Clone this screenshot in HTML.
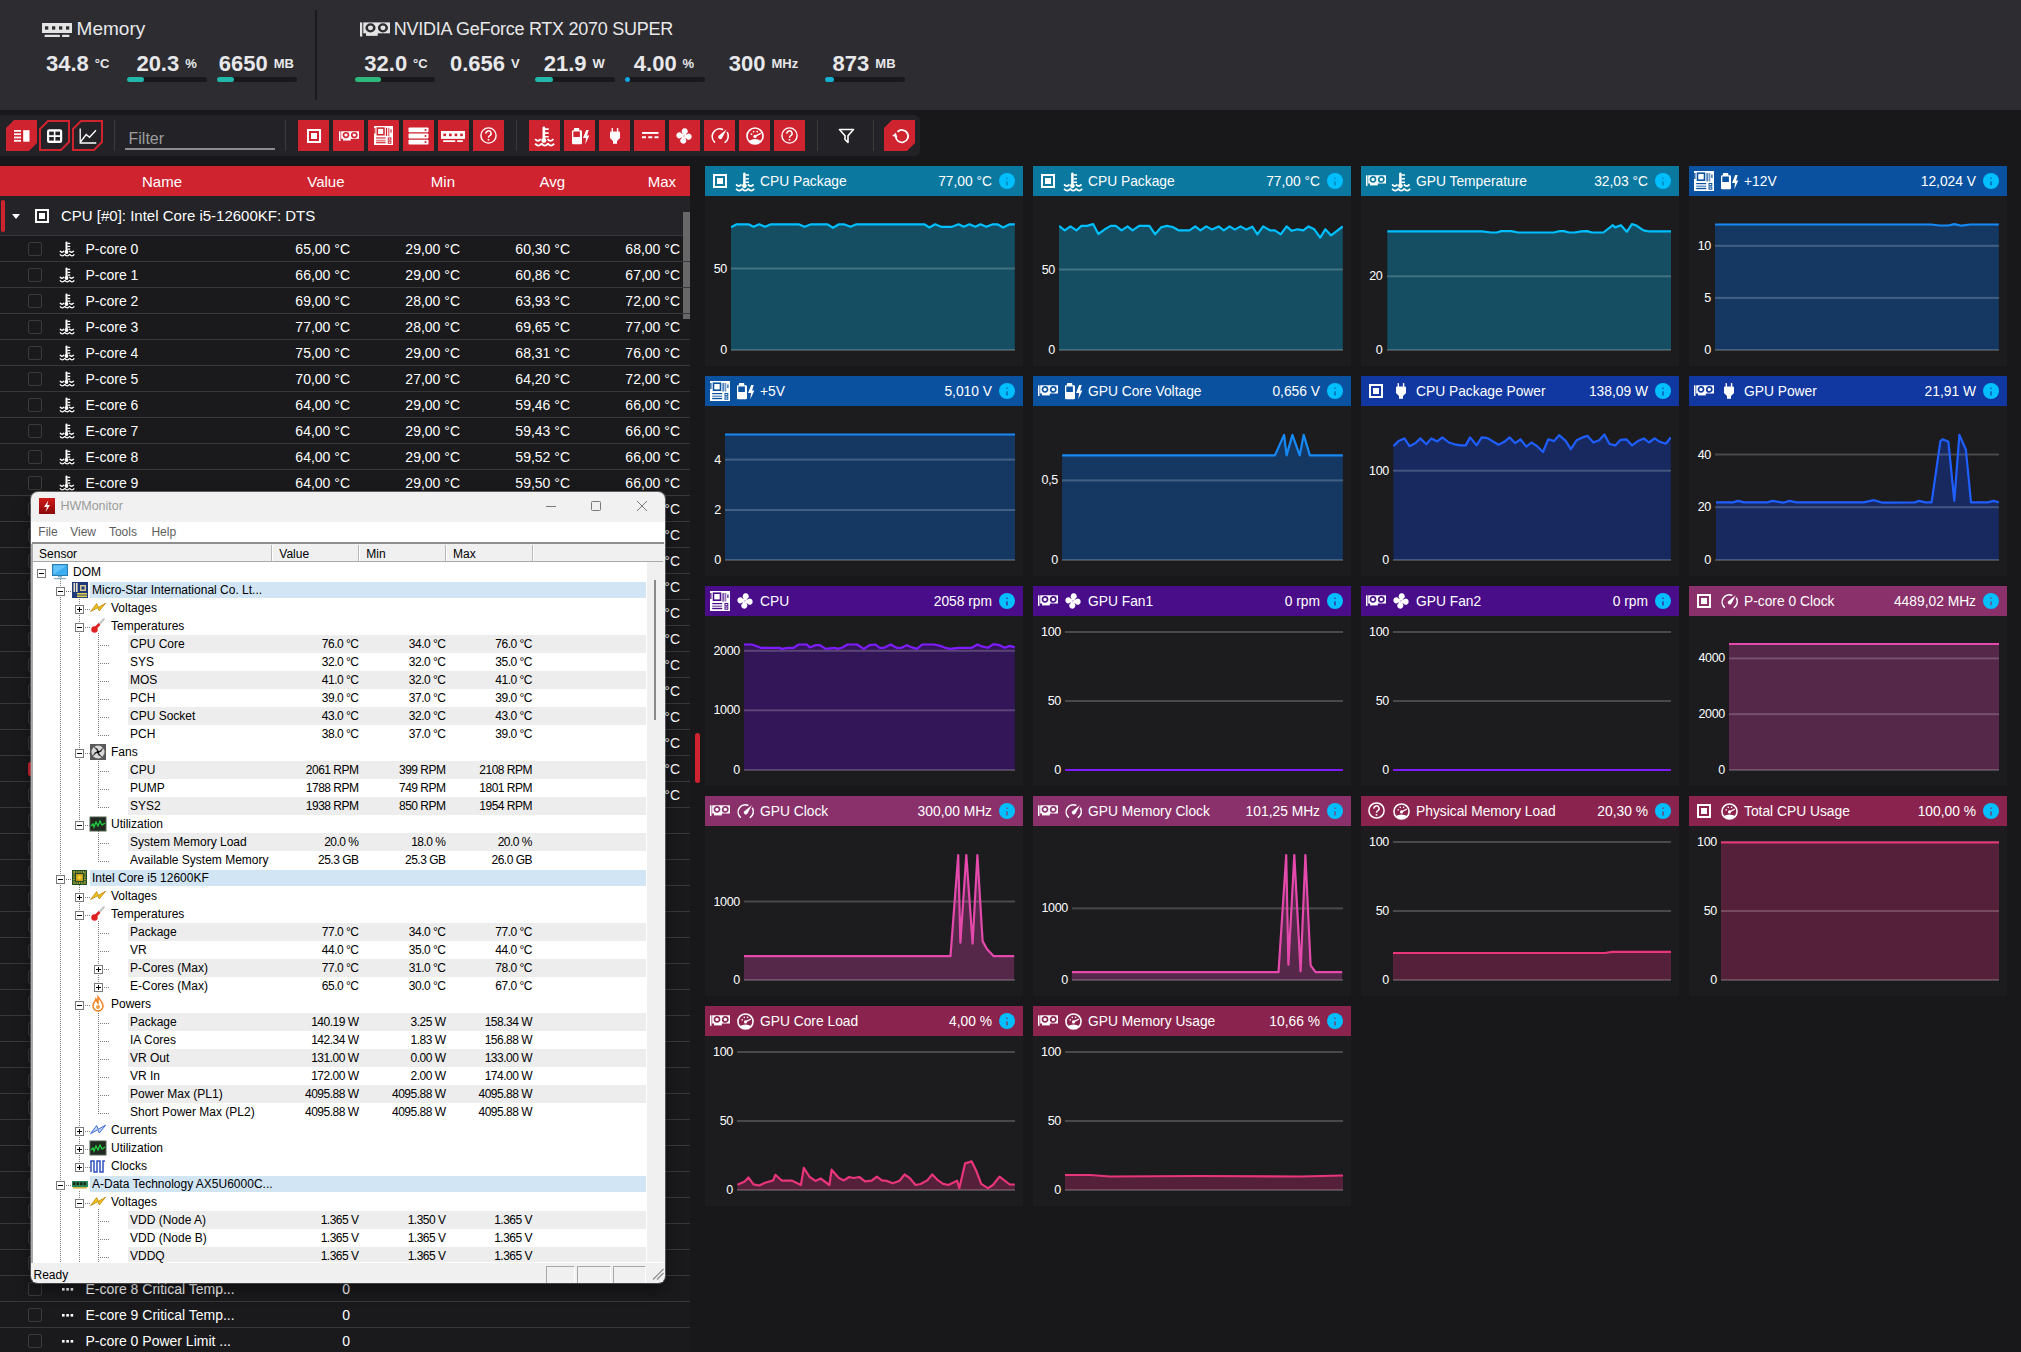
<!DOCTYPE html>
<html><head><meta charset="utf-8"><style>
html,body{margin:0;padding:0;}
body{width:2021px;height:1352px;overflow:hidden;position:relative;background:#18181b;font-family:"Liberation Sans", sans-serif;}
.t{position:absolute;white-space:nowrap;line-height:1;}
.a{position:absolute;}
svg{overflow:visible}
</style></head><body>
<div class="a" style="left:0;top:0;width:2021px;height:110px;background:#2c2c31"></div><div class="a" style="left:0;top:110px;width:2021px;height:56px;background:#18181b"></div><svg style="position:absolute;left:42px;top:23px" width="30" height="14" viewBox="0 0 30 14" ><rect x="0" y="0" width="30" height="10" fill="#e4e4e4"/><rect x="3" y="3.3" width="3.3" height="3.3" fill="#2c2c31"/><rect x="10" y="3.3" width="3.3" height="3.3" fill="#2c2c31"/><rect x="17" y="3.3" width="3.3" height="3.3" fill="#2c2c31"/><rect x="24" y="3.3" width="3.3" height="3.3" fill="#2c2c31"/><rect x="2.5" y="11.8" width="15.5" height="2.2" rx=".8" fill="#e4e4e4"/><rect x="20" y="11.8" width="7.5" height="2.2" rx=".8" fill="#e4e4e4"/></svg><div class="t" style="left:76.6px;top:19.22px;font-size:19px;color:#e8e8ea;">Memory</div><svg style="position:absolute;left:360px;top:22px" width="30" height="16" viewBox="0 0 20 12" preserveAspectRatio="none"><rect x="0" y="0.3" width="1.5" height="10.6" fill="#e4e4e4"/><rect x="2.2" y="0.3" width="17.8" height="8.2" fill="#e4e4e4"/><rect x="4" y="8" width="7.8" height="2.4" fill="#e4e4e4"/><circle cx="7" cy="4.4" r="2.55" fill="none" stroke="#2c2c31" stroke-width="1.7"/><circle cx="15.3" cy="4.4" r="2.55" fill="none" stroke="#2c2c31" stroke-width="1.7"/></svg><div class="t" style="left:393.8px;top:20.06px;font-size:18px;color:#e8e8ea;letter-spacing:-0.26px;">NVIDIA GeForce RTX 2070 SUPER</div><div class="a" style="left:315px;top:10px;width:2px;height:90px;background:#1b1b1f"></div><div class="t" style="left:46px;top:52.58px;font-size:22px;color:#e8e8ea;font-weight:bold;">34.8</div><div class="t" style="left:94.8125px;top:57.0px;font-size:13px;color:#e8e8ea;font-weight:bold;">°C</div><div class="t" style="left:136.4px;top:52.58px;font-size:22px;color:#e8e8ea;font-weight:bold;">20.3</div><div class="t" style="left:185.2125px;top:57.0px;font-size:13px;color:#e8e8ea;font-weight:bold;">%</div><div class="t" style="left:218.8px;top:52.58px;font-size:22px;color:#e8e8ea;font-weight:bold;">6650</div><div class="t" style="left:273.7375px;top:57.0px;font-size:13px;color:#e8e8ea;font-weight:bold;">MB</div><div class="t" style="left:364.3px;top:52.58px;font-size:22px;color:#e8e8ea;font-weight:bold;">32.0</div><div class="t" style="left:413.1125px;top:57.0px;font-size:13px;color:#e8e8ea;font-weight:bold;">°C</div><div class="t" style="left:449.9px;top:52.58px;font-size:22px;color:#e8e8ea;font-weight:bold;">0.656</div><div class="t" style="left:510.946875px;top:57.0px;font-size:13px;color:#e8e8ea;font-weight:bold;">V</div><div class="t" style="left:543.7px;top:52.58px;font-size:22px;color:#e8e8ea;font-weight:bold;">21.9</div><div class="t" style="left:592.5125px;top:57.0px;font-size:13px;color:#e8e8ea;font-weight:bold;">W</div><div class="t" style="left:633.8px;top:52.58px;font-size:22px;color:#e8e8ea;font-weight:bold;">4.00</div><div class="t" style="left:682.6125px;top:57.0px;font-size:13px;color:#e8e8ea;font-weight:bold;">%</div><div class="t" style="left:728.8px;top:52.58px;font-size:22px;color:#e8e8ea;font-weight:bold;">300</div><div class="t" style="left:771.503125px;top:57.0px;font-size:13px;color:#e8e8ea;font-weight:bold;">MHz</div><div class="t" style="left:832.6px;top:52.58px;font-size:22px;color:#e8e8ea;font-weight:bold;">873</div><div class="t" style="left:875.303125px;top:57.0px;font-size:13px;color:#e8e8ea;font-weight:bold;">MB</div><div class="a" style="left:127px;top:77px;width:80px;height:5px;border-radius:3px;background:#19191c"></div><div class="a" style="left:127px;top:77px;width:17px;height:5px;border-radius:3px;background:#22b8a9"></div><div class="a" style="left:217px;top:77px;width:80px;height:5px;border-radius:3px;background:#19191c"></div><div class="a" style="left:217px;top:77px;width:17px;height:5px;border-radius:3px;background:#22b8a9"></div><div class="a" style="left:355px;top:77px;width:80px;height:5px;border-radius:3px;background:#19191c"></div><div class="a" style="left:355px;top:77px;width:26px;height:5px;border-radius:3px;background:#2fb87c"></div><div class="a" style="left:535px;top:77px;width:80px;height:5px;border-radius:3px;background:#19191c"></div><div class="a" style="left:535px;top:77px;width:18px;height:5px;border-radius:3px;background:#22b8a9"></div><div class="a" style="left:625px;top:77px;width:80px;height:5px;border-radius:3px;background:#19191c"></div><div class="a" style="left:625px;top:77px;width:5px;height:5px;border-radius:3px;background:#12a6e6"></div><div class="a" style="left:825px;top:77px;width:80px;height:5px;border-radius:3px;background:#19191c"></div><div class="a" style="left:825px;top:77px;width:9px;height:5px;border-radius:3px;background:#16b2d2"></div><div class="a" style="left:0;top:115px;width:920px;height:41px;border-radius:0 6px 6px 0;background:#232327"></div><div class="a" style="left:6px;top:120px;width:31px;height:31px;background:#cf232f;clip-path:polygon(8px 0,100% 0,100% calc(100% - 8px),calc(100% - 8px) 100%,0 100%,0 8px)"></div><svg style="position:absolute;left:6px;top:120px" width="31" height="31" viewBox="0 0 31 31" ><g fill="#fff"><rect x="8" y="10" width="7" height="1.8"/><rect x="8" y="13.3" width="7" height="1.8"/><rect x="8" y="16.6" width="7" height="1.8"/><rect x="8" y="19.9" width="7" height="1.8"/><rect x="17.2" y="10.2" width="6.3" height="11.5"/></g></svg><svg style="position:absolute;left:39px;top:120px" width="31" height="31" viewBox="0 0 31 31" ><polygon points="9,1 30,1 30,22 22,30 1,30 1,9" fill="none" stroke="#cf232f" stroke-width="2"/></svg><svg style="position:absolute;left:72px;top:120px" width="31" height="31" viewBox="0 0 31 31" ><polygon points="9,1 30,1 30,22 22,30 1,30 1,9" fill="none" stroke="#cf232f" stroke-width="2"/></svg><svg style="position:absolute;left:39px;top:120px" width="31" height="31" viewBox="0 0 31 31" ><rect x="8" y="9.2" width="15.2" height="13.8" rx="2.2" fill="#fff"/><g fill="#232327"><rect x="10.2" y="11.6" width="4.6" height="3.6"/><rect x="16.4" y="11.6" width="4.6" height="3.6"/><rect x="10.2" y="17" width="4.6" height="3.6"/><rect x="16.4" y="17" width="4.6" height="3.6"/></g></svg><svg style="position:absolute;left:72px;top:120px" width="31" height="31" viewBox="0 0 31 31" ><path d="M8.2 8.5 V23 H24.3" fill="none" stroke="#fff" stroke-width="1.3"/><path d="M8.5 22 L14.2 14.5 L17.5 17.3 L24 10.2" fill="none" stroke="#fff" stroke-width="1.3"/></svg><div class="a" style="left:114px;top:120px;width:1px;height:31px;background:#3a3a36"></div><div class="a" style="left:285px;top:120px;width:1px;height:31px;background:#3a3a36"></div><div class="a" style="left:516px;top:120px;width:1px;height:31px;background:#3a3a36"></div><div class="a" style="left:817px;top:120px;width:1px;height:31px;background:#3a3a36"></div><div class="a" style="left:873px;top:120px;width:1px;height:31px;background:#3a3a36"></div><div class="t" style="left:128.5px;top:130.96px;font-size:16px;color:#9c9c9c;">Filter</div><div class="a" style="left:125px;top:148px;width:150px;height:1.5px;background:#8c8c8c"></div><div class="a" style="left:298px;top:120px;width:31px;height:31px;background:#cf232f"></div><div class="a" style="left:333px;top:120px;width:31px;height:31px;background:#cf232f"></div><div class="a" style="left:368px;top:120px;width:31px;height:31px;background:#cf232f"></div><div class="a" style="left:403px;top:120px;width:31px;height:31px;background:#cf232f"></div><div class="a" style="left:438px;top:120px;width:31px;height:31px;background:#cf232f"></div><div class="a" style="left:473px;top:120px;width:31px;height:31px;background:#cf232f"></div><div class="a" style="left:529px;top:120px;width:31px;height:31px;background:#cf232f"></div><div class="a" style="left:564px;top:120px;width:31px;height:31px;background:#cf232f"></div><div class="a" style="left:599px;top:120px;width:31px;height:31px;background:#cf232f"></div><div class="a" style="left:634px;top:120px;width:31px;height:31px;background:#cf232f"></div><div class="a" style="left:669px;top:120px;width:31px;height:31px;background:#cf232f"></div><div class="a" style="left:704px;top:120px;width:31px;height:31px;background:#cf232f"></div><div class="a" style="left:739px;top:120px;width:31px;height:31px;background:#cf232f"></div><div class="a" style="left:774px;top:120px;width:31px;height:31px;background:#cf232f"></div><svg style="position:absolute;left:306.5px;top:128.5px" width="14" height="14" viewBox="0 0 14 14" ><rect x="1" y="1" width="12" height="12" fill="none" stroke="#fff" stroke-width="2"/><rect x="4" y="4" width="6" height="6" fill="#fff"/></svg><svg style="position:absolute;left:338.5px;top:131px" width="20" height="11" viewBox="0 0 20 12" preserveAspectRatio="none"><rect x="0" y="0.3" width="1.5" height="10.6" fill="#fff"/><rect x="2.2" y="0.3" width="17.8" height="8.2" fill="#fff"/><rect x="4" y="8" width="7.8" height="2.4" fill="#fff"/><circle cx="7" cy="4.4" r="2.55" fill="none" stroke="#cf232f" stroke-width="1.7"/><circle cx="15.3" cy="4.4" r="2.55" fill="none" stroke="#cf232f" stroke-width="1.7"/></svg><svg style="position:absolute;left:374px;top:126px" width="19" height="19" viewBox="0 0 20 20" ><rect x="0" y="0" width="20" height="20" fill="#fff"/><rect x="3.5" y="2.2" width="7" height="7" fill="none" stroke="#cf232f" stroke-width="1.6"/><rect x="12.5" y="2" width="1.2" height="8.5" fill="#cf232f"/><rect x="14.5" y="2" width="1.8" height="8.5" fill="#cf232f" opacity=".6"/><rect x="17.3" y="3.5" width="1.2" height="3.5" fill="#cf232f"/><rect x="0" y="2" width="1.6" height="6" fill="#cf232f" opacity=".8"/><rect x="2.2" y="12" width="10" height="1.2" fill="#cf232f"/><rect x="2.2" y="14.5" width="10" height="1.8" fill="#cf232f" opacity=".6"/><rect x="2.2" y="17" width="10" height="1.2" fill="#cf232f"/><rect x="15" y="12.5" width="2.8" height="2.2" fill="none" stroke="#cf232f" stroke-width="1"/><rect x="15" y="16" width="2.8" height="2.2" fill="none" stroke="#cf232f" stroke-width="1"/></svg><svg style="position:absolute;left:408px;top:127px" width="21" height="18" viewBox="0 0 21 18" ><g fill="#fff"><rect x="0.5" y="0.5" width="20" height="4.8" rx=".8"/><rect x="0.5" y="6.6" width="20" height="4.8" rx=".8"/><rect x="0.5" y="12.7" width="20" height="4.8" rx=".8"/></g><g fill="#cf232f"><circle cx="17.5" cy="2.9" r="1"/><circle cx="17.5" cy="9" r="1"/><circle cx="17.5" cy="15.1" r="1"/></g></svg><svg style="position:absolute;left:441px;top:131px" width="24" height="11" viewBox="0 0 30 14" preserveAspectRatio="none"><rect x="0" y="0" width="30" height="10" fill="#fff"/><rect x="3" y="3.3" width="3.3" height="3.3" fill="#cf232f"/><rect x="10" y="3.3" width="3.3" height="3.3" fill="#cf232f"/><rect x="17" y="3.3" width="3.3" height="3.3" fill="#cf232f"/><rect x="24" y="3.3" width="3.3" height="3.3" fill="#cf232f"/><rect x="2.5" y="11.8" width="15.5" height="2.2" rx=".8" fill="#fff"/><rect x="20" y="11.8" width="7.5" height="2.2" rx=".8" fill="#fff"/></svg><svg style="position:absolute;left:480px;top:127px" width="17" height="17" viewBox="0 0 17 17" ><circle cx="8.5" cy="8.5" r="7.6" fill="none" stroke="#fff" stroke-width="1.4"/><path d="M5.9 6.6 A2.6 2.6 0 1 1 9.8 8.7 Q8.5 9.4 8.5 10.8" fill="none" stroke="#fff" stroke-width="1.5"/><rect x="7.7" y="12" width="1.6" height="1.6" fill="#fff"/></svg><svg style="position:absolute;left:534px;top:126px" width="21" height="21" viewBox="0 0 16 16" ><g fill="none" stroke="#fff"><path d="M7.5 1.4 V10.5" stroke-width="2" stroke-linecap="round"/><path d="M8.4 2.4 H11.2 M8.4 5.4 H11.2 M8.4 8.2 H11.2" stroke-width="1.3"/><path d="M0.9 9.9 Q3 12.7 5.1 9.9 M10.3 9.9 Q12.5 12.7 14.8 9.9" stroke-width="1.4"/><path d="M0.9 13.4 Q3.4 16.4 5.8 13.4 Q8.2 16.4 10.6 13.4 Q13 16.4 15.3 13.4" stroke-width="1.4" stroke-linejoin="bevel"/></g><circle cx="7.5" cy="11" r="1.9" fill="#fff"/></svg><svg style="position:absolute;left:572px;top:128px" width="18" height="17" viewBox="0 0 18 17" ><rect x="1.9" y="0" width="5.4" height="3" rx="1" fill="#fff"/><rect x="0" y="2.2" width="10" height="14.1" rx="1.2" fill="#fff"/><rect x="1.3" y="3.5" width="6.6" height="5.5" fill="#cf232f"/><path d="M14.2 2.1 H16.7 L15.1 7.4 H17.3 L13.3 16.2 L14 10 H11 Z" fill="#fff"/></svg><svg style="position:absolute;left:610px;top:128px" width="10" height="16" viewBox="0 0 10 16" ><rect x="1.6" y="0" width="1.4" height="4" rx=".6" fill="#fff"/><rect x="6.9" y="0" width="1.4" height="4" rx=".6" fill="#fff"/><path d="M0 4.5 Q0 3.6 1 3.6 H9 Q10 3.6 10 4.5 V10 L7 13 V15.8 H3 V13 L0 10 Z" fill="#fff"/></svg><svg style="position:absolute;left:641.5px;top:131.5px" width="17" height="8" viewBox="0 0 17 8" ><rect x="0" y="0" width="16.5" height="1.9" fill="#fff"/><rect x="0" y="4.3" width="4" height="1.9" fill="#fff"/><rect x="6.25" y="4.3" width="4" height="1.9" fill="#fff"/><rect x="12.5" y="4.3" width="4" height="1.9" fill="#fff"/></svg><svg style="position:absolute;left:675px;top:127px" width="18" height="18" viewBox="0 0 18 18" ><path transform="rotate(0 9 9)" d="M8.9 9.3 L6.9 5.7 A3.1 3.1 0 1 1 12.6 5.6 Q11 6.6 10.4 8.9 Z" fill="#fff"/><path transform="rotate(90 9 9)" d="M8.9 9.3 L6.9 5.7 A3.1 3.1 0 1 1 12.6 5.6 Q11 6.6 10.4 8.9 Z" fill="#fff"/><path transform="rotate(180 9 9)" d="M8.9 9.3 L6.9 5.7 A3.1 3.1 0 1 1 12.6 5.6 Q11 6.6 10.4 8.9 Z" fill="#fff"/><path transform="rotate(270 9 9)" d="M8.9 9.3 L6.9 5.7 A3.1 3.1 0 1 1 12.6 5.6 Q11 6.6 10.4 8.9 Z" fill="#fff"/><circle cx="9" cy="9" r="1.6" fill="#fff"/><circle cx="9" cy="9" r="0.8" fill="#cf232f" opacity=".5"/></svg><svg style="position:absolute;left:711px;top:127px" width="18" height="17" viewBox="0 0 17 16" ><path d="M3.4 14.2 A7.2 7.2 0 0 1 10.8 2.2" fill="none" stroke="#fff" stroke-width="1.5" stroke-linecap="round"/><path d="M15.5 5.2 A7.2 7.2 0 0 1 13.3 14.4" fill="none" stroke="#fff" stroke-width="1.5" stroke-linecap="round"/><path d="M14.8 2.2 L10.5 10.4 A2 2 0 1 1 7 8.4 Z" fill="#fff"/></svg><svg style="position:absolute;left:745.5px;top:126.5px" width="18" height="18" viewBox="0 0 16.4 16.4" ><circle cx="8.2" cy="8.2" r="7.3" fill="none" stroke="#fff" stroke-width="1.5"/><path d="M2.8 12.6 Q8.2 9.4 13.6 12.6 Q12 15.5 8.2 15.5 Q4.4 15.5 2.8 12.6Z" fill="#fff"/><circle cx="8.2" cy="8.6" r="1.5" fill="#fff"/><path d="M8.2 8.6 L13 6" stroke="#fff" stroke-width="1.3" stroke-linecap="round"/><circle cx="5" cy="6.6" r=".8" fill="#fff"/><circle cx="7" cy="4.2" r=".8" fill="#fff"/><circle cx="10.2" cy="4.2" r=".8" fill="#fff"/></svg><svg style="position:absolute;left:781px;top:127px" width="17" height="17" viewBox="0 0 17 17" ><circle cx="8.5" cy="8.5" r="7.6" fill="none" stroke="#fff" stroke-width="1.4"/><path d="M5.9 6.6 A2.6 2.6 0 1 1 9.8 8.7 Q8.5 9.4 8.5 10.8" fill="none" stroke="#fff" stroke-width="1.5"/><rect x="7.7" y="12" width="1.6" height="1.6" fill="#fff"/></svg><svg style="position:absolute;left:838px;top:128px" width="17" height="16" viewBox="0 0 17 16" ><path d="M1.5 1.5 H15.5 L10 7.8 V14.5 L7 11.5 V7.8 Z" fill="none" stroke="#fff" stroke-width="1.6" stroke-linejoin="round"/></svg><div class="a" style="left:884px;top:120px;width:31px;height:31px;background:#cf232f;clip-path:polygon(8px 0,100% 0,100% calc(100% - 8px),calc(100% - 8px) 100%,0 100%,0 8px)"></div><svg style="position:absolute;left:891px;top:128px" width="17" height="16" viewBox="0 0 17 16" ><path d="M4.2 8 A6.2 6.2 0 1 0 6 3.6" fill="none" stroke="#fff" stroke-width="1.8" transform="translate(0.5,0.2)"/><path d="M1.2 8 L4.7 4.8 L6.4 9.3 Z" fill="#fff"/></svg><div class="a" style="left:0;top:166px;width:690px;height:30px;background:#cf232f"></div><div class="t" style="left:112.0px;width:100px;text-align:center;top:174.3px;font-size:15px;color:#fff;">Name</div><div class="t" style="left:244.5px;width:100px;text-align:right;top:174.3px;font-size:15px;color:#fff;">Value</div><div class="t" style="left:355px;width:100px;text-align:right;top:174.3px;font-size:15px;color:#fff;">Min</div><div class="t" style="left:465px;width:100px;text-align:right;top:174.3px;font-size:15px;color:#fff;">Avg</div><div class="t" style="left:576px;width:100px;text-align:right;top:174.3px;font-size:15px;color:#fff;">Max</div><div class="a" style="left:0;top:196px;width:690px;height:1156px;background:#1a1a1d"></div><div class="a" style="left:0;top:196px;width:690px;height:39px;background:#232328"></div><div class="a" style="left:0;top:235px;width:690px;height:1px;background:#38383c"></div><div class="a" style="left:1px;top:200px;width:4px;height:32px;border-radius:2px;background:#cf232f"></div><svg style="position:absolute;left:12px;top:214px" width="8" height="5" viewBox="0 0 8 5" ><path d="M0 0 H8 L4 5 Z" fill="#fff"/></svg><svg style="position:absolute;left:35px;top:209px" width="14" height="14" viewBox="0 0 14 14" ><rect x="1" y="1" width="12" height="12" fill="none" stroke="#fff" stroke-width="2"/><rect x="4" y="4" width="6" height="6" fill="#fff"/></svg><div class="t" style="left:61px;top:208.3px;font-size:15px;color:#fff;">CPU [#0]: Intel Core i5-12600KF: DTS</div><div class="a" style="left:683px;top:212px;width:7px;height:107px;background:#686868"></div><div class="a" style="left:0;top:261px;width:690px;height:1px;background:#38383c"></div><div class="a" style="left:28px;top:242px;width:12px;height:12px;border:1.3px solid #3b3b3b;border-radius:2px;background:transparent"></div><svg style="position:absolute;left:59px;top:241px" width="16" height="16" viewBox="0 0 16 16" ><g fill="none" stroke="#fff"><path d="M7.5 1.4 V10.5" stroke-width="2" stroke-linecap="round"/><path d="M8.4 2.4 H11.2 M8.4 5.4 H11.2 M8.4 8.2 H11.2" stroke-width="1.3"/><path d="M0.9 9.9 Q3 12.7 5.1 9.9 M10.3 9.9 Q12.5 12.7 14.8 9.9" stroke-width="1.4"/><path d="M0.9 13.4 Q3.4 16.4 5.8 13.4 Q8.2 16.4 10.6 13.4 Q13 16.4 15.3 13.4" stroke-width="1.4" stroke-linejoin="bevel"/></g><circle cx="7.5" cy="11" r="1.9" fill="#fff"/></svg><div class="t" style="left:85.5px;top:241.95px;font-size:14px;color:#fff;">P-core 0</div><div class="t" style="left:230px;width:120px;text-align:right;top:241.95px;font-size:14px;color:#fff;">65,00 °C</div><div class="t" style="left:340px;width:120px;text-align:right;top:241.95px;font-size:14px;color:#fff;">29,00 °C</div><div class="t" style="left:450px;width:120px;text-align:right;top:241.95px;font-size:14px;color:#fff;">60,30 °C</div><div class="t" style="left:560px;width:120px;text-align:right;top:241.95px;font-size:14px;color:#fff;">68,00 °C</div><div class="a" style="left:0;top:287px;width:690px;height:1px;background:#38383c"></div><div class="a" style="left:28px;top:268px;width:12px;height:12px;border:1.3px solid #3b3b3b;border-radius:2px;background:transparent"></div><svg style="position:absolute;left:59px;top:267px" width="16" height="16" viewBox="0 0 16 16" ><g fill="none" stroke="#fff"><path d="M7.5 1.4 V10.5" stroke-width="2" stroke-linecap="round"/><path d="M8.4 2.4 H11.2 M8.4 5.4 H11.2 M8.4 8.2 H11.2" stroke-width="1.3"/><path d="M0.9 9.9 Q3 12.7 5.1 9.9 M10.3 9.9 Q12.5 12.7 14.8 9.9" stroke-width="1.4"/><path d="M0.9 13.4 Q3.4 16.4 5.8 13.4 Q8.2 16.4 10.6 13.4 Q13 16.4 15.3 13.4" stroke-width="1.4" stroke-linejoin="bevel"/></g><circle cx="7.5" cy="11" r="1.9" fill="#fff"/></svg><div class="t" style="left:85.5px;top:267.95px;font-size:14px;color:#fff;">P-core 1</div><div class="t" style="left:230px;width:120px;text-align:right;top:267.95px;font-size:14px;color:#fff;">66,00 °C</div><div class="t" style="left:340px;width:120px;text-align:right;top:267.95px;font-size:14px;color:#fff;">29,00 °C</div><div class="t" style="left:450px;width:120px;text-align:right;top:267.95px;font-size:14px;color:#fff;">60,86 °C</div><div class="t" style="left:560px;width:120px;text-align:right;top:267.95px;font-size:14px;color:#fff;">67,00 °C</div><div class="a" style="left:0;top:313px;width:690px;height:1px;background:#38383c"></div><div class="a" style="left:28px;top:294px;width:12px;height:12px;border:1.3px solid #3b3b3b;border-radius:2px;background:transparent"></div><svg style="position:absolute;left:59px;top:293px" width="16" height="16" viewBox="0 0 16 16" ><g fill="none" stroke="#fff"><path d="M7.5 1.4 V10.5" stroke-width="2" stroke-linecap="round"/><path d="M8.4 2.4 H11.2 M8.4 5.4 H11.2 M8.4 8.2 H11.2" stroke-width="1.3"/><path d="M0.9 9.9 Q3 12.7 5.1 9.9 M10.3 9.9 Q12.5 12.7 14.8 9.9" stroke-width="1.4"/><path d="M0.9 13.4 Q3.4 16.4 5.8 13.4 Q8.2 16.4 10.6 13.4 Q13 16.4 15.3 13.4" stroke-width="1.4" stroke-linejoin="bevel"/></g><circle cx="7.5" cy="11" r="1.9" fill="#fff"/></svg><div class="t" style="left:85.5px;top:293.95px;font-size:14px;color:#fff;">P-core 2</div><div class="t" style="left:230px;width:120px;text-align:right;top:293.95px;font-size:14px;color:#fff;">69,00 °C</div><div class="t" style="left:340px;width:120px;text-align:right;top:293.95px;font-size:14px;color:#fff;">28,00 °C</div><div class="t" style="left:450px;width:120px;text-align:right;top:293.95px;font-size:14px;color:#fff;">63,93 °C</div><div class="t" style="left:560px;width:120px;text-align:right;top:293.95px;font-size:14px;color:#fff;">72,00 °C</div><div class="a" style="left:0;top:339px;width:690px;height:1px;background:#38383c"></div><div class="a" style="left:28px;top:320px;width:12px;height:12px;border:1.3px solid #3b3b3b;border-radius:2px;background:transparent"></div><svg style="position:absolute;left:59px;top:319px" width="16" height="16" viewBox="0 0 16 16" ><g fill="none" stroke="#fff"><path d="M7.5 1.4 V10.5" stroke-width="2" stroke-linecap="round"/><path d="M8.4 2.4 H11.2 M8.4 5.4 H11.2 M8.4 8.2 H11.2" stroke-width="1.3"/><path d="M0.9 9.9 Q3 12.7 5.1 9.9 M10.3 9.9 Q12.5 12.7 14.8 9.9" stroke-width="1.4"/><path d="M0.9 13.4 Q3.4 16.4 5.8 13.4 Q8.2 16.4 10.6 13.4 Q13 16.4 15.3 13.4" stroke-width="1.4" stroke-linejoin="bevel"/></g><circle cx="7.5" cy="11" r="1.9" fill="#fff"/></svg><div class="t" style="left:85.5px;top:319.95px;font-size:14px;color:#fff;">P-core 3</div><div class="t" style="left:230px;width:120px;text-align:right;top:319.95px;font-size:14px;color:#fff;">77,00 °C</div><div class="t" style="left:340px;width:120px;text-align:right;top:319.95px;font-size:14px;color:#fff;">28,00 °C</div><div class="t" style="left:450px;width:120px;text-align:right;top:319.95px;font-size:14px;color:#fff;">69,65 °C</div><div class="t" style="left:560px;width:120px;text-align:right;top:319.95px;font-size:14px;color:#fff;">77,00 °C</div><div class="a" style="left:0;top:365px;width:690px;height:1px;background:#38383c"></div><div class="a" style="left:28px;top:346px;width:12px;height:12px;border:1.3px solid #3b3b3b;border-radius:2px;background:transparent"></div><svg style="position:absolute;left:59px;top:345px" width="16" height="16" viewBox="0 0 16 16" ><g fill="none" stroke="#fff"><path d="M7.5 1.4 V10.5" stroke-width="2" stroke-linecap="round"/><path d="M8.4 2.4 H11.2 M8.4 5.4 H11.2 M8.4 8.2 H11.2" stroke-width="1.3"/><path d="M0.9 9.9 Q3 12.7 5.1 9.9 M10.3 9.9 Q12.5 12.7 14.8 9.9" stroke-width="1.4"/><path d="M0.9 13.4 Q3.4 16.4 5.8 13.4 Q8.2 16.4 10.6 13.4 Q13 16.4 15.3 13.4" stroke-width="1.4" stroke-linejoin="bevel"/></g><circle cx="7.5" cy="11" r="1.9" fill="#fff"/></svg><div class="t" style="left:85.5px;top:345.95px;font-size:14px;color:#fff;">P-core 4</div><div class="t" style="left:230px;width:120px;text-align:right;top:345.95px;font-size:14px;color:#fff;">75,00 °C</div><div class="t" style="left:340px;width:120px;text-align:right;top:345.95px;font-size:14px;color:#fff;">29,00 °C</div><div class="t" style="left:450px;width:120px;text-align:right;top:345.95px;font-size:14px;color:#fff;">68,31 °C</div><div class="t" style="left:560px;width:120px;text-align:right;top:345.95px;font-size:14px;color:#fff;">76,00 °C</div><div class="a" style="left:0;top:391px;width:690px;height:1px;background:#38383c"></div><div class="a" style="left:28px;top:372px;width:12px;height:12px;border:1.3px solid #3b3b3b;border-radius:2px;background:transparent"></div><svg style="position:absolute;left:59px;top:371px" width="16" height="16" viewBox="0 0 16 16" ><g fill="none" stroke="#fff"><path d="M7.5 1.4 V10.5" stroke-width="2" stroke-linecap="round"/><path d="M8.4 2.4 H11.2 M8.4 5.4 H11.2 M8.4 8.2 H11.2" stroke-width="1.3"/><path d="M0.9 9.9 Q3 12.7 5.1 9.9 M10.3 9.9 Q12.5 12.7 14.8 9.9" stroke-width="1.4"/><path d="M0.9 13.4 Q3.4 16.4 5.8 13.4 Q8.2 16.4 10.6 13.4 Q13 16.4 15.3 13.4" stroke-width="1.4" stroke-linejoin="bevel"/></g><circle cx="7.5" cy="11" r="1.9" fill="#fff"/></svg><div class="t" style="left:85.5px;top:371.95px;font-size:14px;color:#fff;">P-core 5</div><div class="t" style="left:230px;width:120px;text-align:right;top:371.95px;font-size:14px;color:#fff;">70,00 °C</div><div class="t" style="left:340px;width:120px;text-align:right;top:371.95px;font-size:14px;color:#fff;">27,00 °C</div><div class="t" style="left:450px;width:120px;text-align:right;top:371.95px;font-size:14px;color:#fff;">64,20 °C</div><div class="t" style="left:560px;width:120px;text-align:right;top:371.95px;font-size:14px;color:#fff;">72,00 °C</div><div class="a" style="left:0;top:417px;width:690px;height:1px;background:#38383c"></div><div class="a" style="left:28px;top:398px;width:12px;height:12px;border:1.3px solid #3b3b3b;border-radius:2px;background:transparent"></div><svg style="position:absolute;left:59px;top:397px" width="16" height="16" viewBox="0 0 16 16" ><g fill="none" stroke="#fff"><path d="M7.5 1.4 V10.5" stroke-width="2" stroke-linecap="round"/><path d="M8.4 2.4 H11.2 M8.4 5.4 H11.2 M8.4 8.2 H11.2" stroke-width="1.3"/><path d="M0.9 9.9 Q3 12.7 5.1 9.9 M10.3 9.9 Q12.5 12.7 14.8 9.9" stroke-width="1.4"/><path d="M0.9 13.4 Q3.4 16.4 5.8 13.4 Q8.2 16.4 10.6 13.4 Q13 16.4 15.3 13.4" stroke-width="1.4" stroke-linejoin="bevel"/></g><circle cx="7.5" cy="11" r="1.9" fill="#fff"/></svg><div class="t" style="left:85.5px;top:397.95px;font-size:14px;color:#fff;">E-core 6</div><div class="t" style="left:230px;width:120px;text-align:right;top:397.95px;font-size:14px;color:#fff;">64,00 °C</div><div class="t" style="left:340px;width:120px;text-align:right;top:397.95px;font-size:14px;color:#fff;">29,00 °C</div><div class="t" style="left:450px;width:120px;text-align:right;top:397.95px;font-size:14px;color:#fff;">59,46 °C</div><div class="t" style="left:560px;width:120px;text-align:right;top:397.95px;font-size:14px;color:#fff;">66,00 °C</div><div class="a" style="left:0;top:443px;width:690px;height:1px;background:#38383c"></div><div class="a" style="left:28px;top:424px;width:12px;height:12px;border:1.3px solid #3b3b3b;border-radius:2px;background:transparent"></div><svg style="position:absolute;left:59px;top:423px" width="16" height="16" viewBox="0 0 16 16" ><g fill="none" stroke="#fff"><path d="M7.5 1.4 V10.5" stroke-width="2" stroke-linecap="round"/><path d="M8.4 2.4 H11.2 M8.4 5.4 H11.2 M8.4 8.2 H11.2" stroke-width="1.3"/><path d="M0.9 9.9 Q3 12.7 5.1 9.9 M10.3 9.9 Q12.5 12.7 14.8 9.9" stroke-width="1.4"/><path d="M0.9 13.4 Q3.4 16.4 5.8 13.4 Q8.2 16.4 10.6 13.4 Q13 16.4 15.3 13.4" stroke-width="1.4" stroke-linejoin="bevel"/></g><circle cx="7.5" cy="11" r="1.9" fill="#fff"/></svg><div class="t" style="left:85.5px;top:423.95px;font-size:14px;color:#fff;">E-core 7</div><div class="t" style="left:230px;width:120px;text-align:right;top:423.95px;font-size:14px;color:#fff;">64,00 °C</div><div class="t" style="left:340px;width:120px;text-align:right;top:423.95px;font-size:14px;color:#fff;">29,00 °C</div><div class="t" style="left:450px;width:120px;text-align:right;top:423.95px;font-size:14px;color:#fff;">59,43 °C</div><div class="t" style="left:560px;width:120px;text-align:right;top:423.95px;font-size:14px;color:#fff;">66,00 °C</div><div class="a" style="left:0;top:469px;width:690px;height:1px;background:#38383c"></div><div class="a" style="left:28px;top:450px;width:12px;height:12px;border:1.3px solid #3b3b3b;border-radius:2px;background:transparent"></div><svg style="position:absolute;left:59px;top:449px" width="16" height="16" viewBox="0 0 16 16" ><g fill="none" stroke="#fff"><path d="M7.5 1.4 V10.5" stroke-width="2" stroke-linecap="round"/><path d="M8.4 2.4 H11.2 M8.4 5.4 H11.2 M8.4 8.2 H11.2" stroke-width="1.3"/><path d="M0.9 9.9 Q3 12.7 5.1 9.9 M10.3 9.9 Q12.5 12.7 14.8 9.9" stroke-width="1.4"/><path d="M0.9 13.4 Q3.4 16.4 5.8 13.4 Q8.2 16.4 10.6 13.4 Q13 16.4 15.3 13.4" stroke-width="1.4" stroke-linejoin="bevel"/></g><circle cx="7.5" cy="11" r="1.9" fill="#fff"/></svg><div class="t" style="left:85.5px;top:449.95px;font-size:14px;color:#fff;">E-core 8</div><div class="t" style="left:230px;width:120px;text-align:right;top:449.95px;font-size:14px;color:#fff;">64,00 °C</div><div class="t" style="left:340px;width:120px;text-align:right;top:449.95px;font-size:14px;color:#fff;">29,00 °C</div><div class="t" style="left:450px;width:120px;text-align:right;top:449.95px;font-size:14px;color:#fff;">59,52 °C</div><div class="t" style="left:560px;width:120px;text-align:right;top:449.95px;font-size:14px;color:#fff;">66,00 °C</div><div class="a" style="left:0;top:495px;width:690px;height:1px;background:#38383c"></div><div class="a" style="left:28px;top:476px;width:12px;height:12px;border:1.3px solid #3b3b3b;border-radius:2px;background:transparent"></div><svg style="position:absolute;left:59px;top:475px" width="16" height="16" viewBox="0 0 16 16" ><g fill="none" stroke="#fff"><path d="M7.5 1.4 V10.5" stroke-width="2" stroke-linecap="round"/><path d="M8.4 2.4 H11.2 M8.4 5.4 H11.2 M8.4 8.2 H11.2" stroke-width="1.3"/><path d="M0.9 9.9 Q3 12.7 5.1 9.9 M10.3 9.9 Q12.5 12.7 14.8 9.9" stroke-width="1.4"/><path d="M0.9 13.4 Q3.4 16.4 5.8 13.4 Q8.2 16.4 10.6 13.4 Q13 16.4 15.3 13.4" stroke-width="1.4" stroke-linejoin="bevel"/></g><circle cx="7.5" cy="11" r="1.9" fill="#fff"/></svg><div class="t" style="left:85.5px;top:475.95px;font-size:14px;color:#fff;">E-core 9</div><div class="t" style="left:230px;width:120px;text-align:right;top:475.95px;font-size:14px;color:#fff;">64,00 °C</div><div class="t" style="left:340px;width:120px;text-align:right;top:475.95px;font-size:14px;color:#fff;">29,00 °C</div><div class="t" style="left:450px;width:120px;text-align:right;top:475.95px;font-size:14px;color:#fff;">59,50 °C</div><div class="t" style="left:560px;width:120px;text-align:right;top:475.95px;font-size:14px;color:#fff;">66,00 °C</div><div class="a" style="left:0;top:521px;width:690px;height:1px;background:#38383c"></div><div class="a" style="left:28px;top:502px;width:12px;height:12px;border:1.3px solid #3b3b3b;border-radius:2px;background:transparent"></div><div class="t" style="left:560px;width:120px;text-align:right;top:501.95px;font-size:14px;color:#fff;">64,00 °C</div><div class="a" style="left:0;top:547px;width:690px;height:1px;background:#38383c"></div><div class="a" style="left:28px;top:528px;width:12px;height:12px;border:1.3px solid #3b3b3b;border-radius:2px;background:transparent"></div><div class="t" style="left:560px;width:120px;text-align:right;top:527.95px;font-size:14px;color:#fff;">64,00 °C</div><div class="a" style="left:0;top:573px;width:690px;height:1px;background:#38383c"></div><div class="a" style="left:28px;top:554px;width:12px;height:12px;border:1.3px solid #3b3b3b;border-radius:2px;background:transparent"></div><div class="t" style="left:560px;width:120px;text-align:right;top:553.95px;font-size:14px;color:#fff;">64,00 °C</div><div class="a" style="left:0;top:599px;width:690px;height:1px;background:#38383c"></div><div class="a" style="left:28px;top:580px;width:12px;height:12px;border:1.3px solid #3b3b3b;border-radius:2px;background:transparent"></div><div class="t" style="left:560px;width:120px;text-align:right;top:579.95px;font-size:14px;color:#fff;">64,00 °C</div><div class="a" style="left:0;top:625px;width:690px;height:1px;background:#38383c"></div><div class="a" style="left:28px;top:606px;width:12px;height:12px;border:1.3px solid #3b3b3b;border-radius:2px;background:transparent"></div><div class="t" style="left:560px;width:120px;text-align:right;top:605.95px;font-size:14px;color:#fff;">64,00 °C</div><div class="a" style="left:0;top:651px;width:690px;height:1px;background:#38383c"></div><div class="a" style="left:28px;top:632px;width:12px;height:12px;border:1.3px solid #3b3b3b;border-radius:2px;background:transparent"></div><div class="t" style="left:560px;width:120px;text-align:right;top:631.95px;font-size:14px;color:#fff;">64,00 °C</div><div class="a" style="left:0;top:677px;width:690px;height:1px;background:#38383c"></div><div class="a" style="left:28px;top:658px;width:12px;height:12px;border:1.3px solid #3b3b3b;border-radius:2px;background:transparent"></div><div class="t" style="left:560px;width:120px;text-align:right;top:657.95px;font-size:14px;color:#fff;">64,00 °C</div><div class="a" style="left:0;top:703px;width:690px;height:1px;background:#38383c"></div><div class="a" style="left:28px;top:684px;width:12px;height:12px;border:1.3px solid #3b3b3b;border-radius:2px;background:transparent"></div><div class="t" style="left:560px;width:120px;text-align:right;top:683.95px;font-size:14px;color:#fff;">64,00 °C</div><div class="a" style="left:0;top:729px;width:690px;height:1px;background:#38383c"></div><div class="a" style="left:28px;top:710px;width:12px;height:12px;border:1.3px solid #3b3b3b;border-radius:2px;background:transparent"></div><div class="t" style="left:560px;width:120px;text-align:right;top:709.95px;font-size:14px;color:#fff;">64,00 °C</div><div class="a" style="left:0;top:755px;width:690px;height:1px;background:#38383c"></div><div class="a" style="left:28px;top:736px;width:12px;height:12px;border:1.3px solid #3b3b3b;border-radius:2px;background:transparent"></div><div class="t" style="left:560px;width:120px;text-align:right;top:735.95px;font-size:14px;color:#fff;">64,00 °C</div><div class="a" style="left:0;top:781px;width:690px;height:1px;background:#38383c"></div><div class="a" style="left:28px;top:762px;width:12px;height:12px;border:1.3px solid #cf232f;border-radius:2px;background:#cf232f"></div><div class="t" style="left:560px;width:120px;text-align:right;top:761.95px;font-size:14px;color:#fff;">64,00 °C</div><div class="a" style="left:0;top:807px;width:690px;height:1px;background:#38383c"></div><div class="a" style="left:28px;top:788px;width:12px;height:12px;border:1.3px solid #3b3b3b;border-radius:2px;background:transparent"></div><div class="t" style="left:560px;width:120px;text-align:right;top:787.95px;font-size:14px;color:#fff;">64,00 °C</div><div class="a" style="left:0;top:833px;width:690px;height:1px;background:#38383c"></div><div class="a" style="left:28px;top:814px;width:12px;height:12px;border:1.3px solid #3b3b3b;border-radius:2px;background:transparent"></div><div class="a" style="left:0;top:859px;width:690px;height:1px;background:#38383c"></div><div class="a" style="left:28px;top:840px;width:12px;height:12px;border:1.3px solid #3b3b3b;border-radius:2px;background:transparent"></div><div class="a" style="left:0;top:885px;width:690px;height:1px;background:#38383c"></div><div class="a" style="left:28px;top:866px;width:12px;height:12px;border:1.3px solid #3b3b3b;border-radius:2px;background:transparent"></div><div class="a" style="left:0;top:911px;width:690px;height:1px;background:#38383c"></div><div class="a" style="left:28px;top:892px;width:12px;height:12px;border:1.3px solid #3b3b3b;border-radius:2px;background:transparent"></div><div class="a" style="left:0;top:937px;width:690px;height:1px;background:#38383c"></div><div class="a" style="left:28px;top:918px;width:12px;height:12px;border:1.3px solid #3b3b3b;border-radius:2px;background:transparent"></div><div class="a" style="left:0;top:963px;width:690px;height:1px;background:#38383c"></div><div class="a" style="left:28px;top:944px;width:12px;height:12px;border:1.3px solid #3b3b3b;border-radius:2px;background:transparent"></div><div class="a" style="left:0;top:989px;width:690px;height:1px;background:#38383c"></div><div class="a" style="left:28px;top:970px;width:12px;height:12px;border:1.3px solid #3b3b3b;border-radius:2px;background:transparent"></div><div class="a" style="left:0;top:1015px;width:690px;height:1px;background:#38383c"></div><div class="a" style="left:28px;top:996px;width:12px;height:12px;border:1.3px solid #3b3b3b;border-radius:2px;background:transparent"></div><div class="a" style="left:0;top:1041px;width:690px;height:1px;background:#38383c"></div><div class="a" style="left:28px;top:1022px;width:12px;height:12px;border:1.3px solid #3b3b3b;border-radius:2px;background:transparent"></div><div class="a" style="left:0;top:1067px;width:690px;height:1px;background:#38383c"></div><div class="a" style="left:28px;top:1048px;width:12px;height:12px;border:1.3px solid #3b3b3b;border-radius:2px;background:transparent"></div><div class="a" style="left:0;top:1093px;width:690px;height:1px;background:#38383c"></div><div class="a" style="left:28px;top:1074px;width:12px;height:12px;border:1.3px solid #3b3b3b;border-radius:2px;background:transparent"></div><div class="a" style="left:0;top:1119px;width:690px;height:1px;background:#38383c"></div><div class="a" style="left:28px;top:1100px;width:12px;height:12px;border:1.3px solid #3b3b3b;border-radius:2px;background:transparent"></div><div class="a" style="left:0;top:1145px;width:690px;height:1px;background:#38383c"></div><div class="a" style="left:28px;top:1126px;width:12px;height:12px;border:1.3px solid #3b3b3b;border-radius:2px;background:transparent"></div><div class="a" style="left:0;top:1171px;width:690px;height:1px;background:#38383c"></div><div class="a" style="left:28px;top:1152px;width:12px;height:12px;border:1.3px solid #3b3b3b;border-radius:2px;background:transparent"></div><div class="a" style="left:0;top:1197px;width:690px;height:1px;background:#38383c"></div><div class="a" style="left:28px;top:1178px;width:12px;height:12px;border:1.3px solid #3b3b3b;border-radius:2px;background:transparent"></div><div class="a" style="left:0;top:1223px;width:690px;height:1px;background:#38383c"></div><div class="a" style="left:28px;top:1204px;width:12px;height:12px;border:1.3px solid #3b3b3b;border-radius:2px;background:transparent"></div><div class="a" style="left:0;top:1249px;width:690px;height:1px;background:#38383c"></div><div class="a" style="left:28px;top:1230px;width:12px;height:12px;border:1.3px solid #3b3b3b;border-radius:2px;background:transparent"></div><div class="a" style="left:0;top:1275px;width:690px;height:1px;background:#38383c"></div><div class="a" style="left:28px;top:1256px;width:12px;height:12px;border:1.3px solid #3b3b3b;border-radius:2px;background:transparent"></div><div class="a" style="left:0;top:1301px;width:690px;height:1px;background:#38383c"></div><div class="a" style="left:28px;top:1282px;width:12px;height:12px;border:1.3px solid #3b3b3b;border-radius:2px;background:transparent"></div><svg style="position:absolute;left:61.5px;top:1288px" width="12" height="3" viewBox="0 0 12 3" ><rect x="0.0" y="0" width="2.6" height="2.6" fill="#fff"/><rect x="4.3" y="0" width="2.6" height="2.6" fill="#fff"/><rect x="8.6" y="0" width="2.6" height="2.6" fill="#fff"/></svg><div class="t" style="left:85.5px;top:1281.95px;font-size:14px;color:#fff;">E-core 8 Critical Temp...</div><div class="t" style="left:230px;width:120px;text-align:right;top:1281.95px;font-size:14px;color:#fff;">0</div><div class="a" style="left:0;top:1327px;width:690px;height:1px;background:#38383c"></div><div class="a" style="left:28px;top:1308px;width:12px;height:12px;border:1.3px solid #3b3b3b;border-radius:2px;background:transparent"></div><svg style="position:absolute;left:61.5px;top:1314px" width="12" height="3" viewBox="0 0 12 3" ><rect x="0.0" y="0" width="2.6" height="2.6" fill="#fff"/><rect x="4.3" y="0" width="2.6" height="2.6" fill="#fff"/><rect x="8.6" y="0" width="2.6" height="2.6" fill="#fff"/></svg><div class="t" style="left:85.5px;top:1307.95px;font-size:14px;color:#fff;">E-core 9 Critical Temp...</div><div class="t" style="left:230px;width:120px;text-align:right;top:1307.95px;font-size:14px;color:#fff;">0</div><div class="a" style="left:0;top:1353px;width:690px;height:1px;background:#38383c"></div><div class="a" style="left:28px;top:1334px;width:12px;height:12px;border:1.3px solid #3b3b3b;border-radius:2px;background:transparent"></div><svg style="position:absolute;left:61.5px;top:1340px" width="12" height="3" viewBox="0 0 12 3" ><rect x="0.0" y="0" width="2.6" height="2.6" fill="#fff"/><rect x="4.3" y="0" width="2.6" height="2.6" fill="#fff"/><rect x="8.6" y="0" width="2.6" height="2.6" fill="#fff"/></svg><div class="t" style="left:85.5px;top:1333.95px;font-size:14px;color:#fff;">P-core 0 Power Limit ...</div><div class="t" style="left:230px;width:120px;text-align:right;top:1333.95px;font-size:14px;color:#fff;">0</div><div class="a" style="left:695px;top:733px;width:5px;height:50px;border-radius:3px;background:#cf232f"></div><div class="a" style="left:705px;top:166px;width:318px;height:200px;background:#1c1c1f"></div><div class="a" style="left:705px;top:166px;width:318px;height:30px;background:#0b78a0"></div><svg style="position:absolute;left:713px;top:174px" width="14" height="14" viewBox="0 0 14 14" ><rect x="1" y="1" width="12" height="12" fill="none" stroke="#fff" stroke-width="2"/><rect x="4" y="4" width="6" height="6" fill="#fff"/></svg><svg style="position:absolute;left:735px;top:172px" width="20" height="20" viewBox="0 0 16 16" ><g fill="none" stroke="#fff"><path d="M7.5 1.4 V10.5" stroke-width="2" stroke-linecap="round"/><path d="M8.4 2.4 H11.2 M8.4 5.4 H11.2 M8.4 8.2 H11.2" stroke-width="1.3"/><path d="M0.9 9.9 Q3 12.7 5.1 9.9 M10.3 9.9 Q12.5 12.7 14.8 9.9" stroke-width="1.4"/><path d="M0.9 13.4 Q3.4 16.4 5.8 13.4 Q8.2 16.4 10.6 13.4 Q13 16.4 15.3 13.4" stroke-width="1.4" stroke-linejoin="bevel"/></g><circle cx="7.5" cy="11" r="1.9" fill="#fff"/></svg><div class="t" style="left:760px;top:174.72px;font-size:13.8px;color:#fff;">CPU Package</div><div class="t" style="left:842px;width:150px;text-align:right;top:174.72px;font-size:13.8px;color:#fff;">77,00 °C</div><svg style="position:absolute;left:999.2px;top:172.5px" width="16" height="16" viewBox="0 0 16 16" ><circle cx="8" cy="8" r="8" fill="#00bfff"/><rect x="7.4" y="8.2" width="1.2" height="4.4" rx=".6" fill="#0b78a0"/><circle cx="8" cy="5.3" r=".75" fill="#0b78a0"/></svg><svg style="position:absolute;left:731px;top:166px;overflow:hidden" width="284" height="185" viewBox="0 0 284 185"><polygon points="0.0,184 0.0,61.2 5.7,58.3 17.4,58.3 22.5,60.8 28.3,58.3 34.1,60.8 40.0,58.3 67.7,58.3 73.6,60.8 80.1,58.3 96.2,58.3 102.0,61.8 107.9,58.3 113.0,58.3 119.5,60.8 125.4,58.3 193.3,58.3 198.4,61.5 204.2,58.3 210.1,60.8 221.0,60.8 227.6,58.3 232.7,60.8 238.5,58.3 244.4,60.8 249.5,58.3 255.3,60.8 261.9,58.3 266.3,58.3 272.1,61.5 278.7,58.3 283.8,58.3 283.8,184" fill="#154e63"/><rect x="0" y="101.5" width="284" height="2" fill="#ffffff" opacity="0.2"/><rect x="0" y="183.0" width="284" height="2" fill="#ffffff" opacity="0.2"/><polyline points="0.0,61.2 5.7,58.3 17.4,58.3 22.5,60.8 28.3,58.3 34.1,60.8 40.0,58.3 67.7,58.3 73.6,60.8 80.1,58.3 96.2,58.3 102.0,61.8 107.9,58.3 113.0,58.3 119.5,60.8 125.4,58.3 193.3,58.3 198.4,61.5 204.2,58.3 210.1,60.8 221.0,60.8 227.6,58.3 232.7,60.8 238.5,58.3 244.4,60.8 249.5,58.3 255.3,60.8 261.9,58.3 266.3,58.3 272.1,61.5 278.7,58.3 283.8,58.3" fill="none" stroke="#00bfff" stroke-width="2.2" stroke-linejoin="round"/></svg><div class="t" style="left:667px;width:60px;text-align:right;top:262.52px;font-size:12.5px;color:#fff;letter-spacing:-0.3px;">50</div><div class="t" style="left:667px;width:60px;text-align:right;top:344.02px;font-size:12.5px;color:#fff;letter-spacing:-0.3px;">0</div><div class="a" style="left:1033px;top:166px;width:318px;height:200px;background:#1c1c1f"></div><div class="a" style="left:1033px;top:166px;width:318px;height:30px;background:#0b78a0"></div><svg style="position:absolute;left:1041px;top:174px" width="14" height="14" viewBox="0 0 14 14" ><rect x="1" y="1" width="12" height="12" fill="none" stroke="#fff" stroke-width="2"/><rect x="4" y="4" width="6" height="6" fill="#fff"/></svg><svg style="position:absolute;left:1063px;top:172px" width="20" height="20" viewBox="0 0 16 16" ><g fill="none" stroke="#fff"><path d="M7.5 1.4 V10.5" stroke-width="2" stroke-linecap="round"/><path d="M8.4 2.4 H11.2 M8.4 5.4 H11.2 M8.4 8.2 H11.2" stroke-width="1.3"/><path d="M0.9 9.9 Q3 12.7 5.1 9.9 M10.3 9.9 Q12.5 12.7 14.8 9.9" stroke-width="1.4"/><path d="M0.9 13.4 Q3.4 16.4 5.8 13.4 Q8.2 16.4 10.6 13.4 Q13 16.4 15.3 13.4" stroke-width="1.4" stroke-linejoin="bevel"/></g><circle cx="7.5" cy="11" r="1.9" fill="#fff"/></svg><div class="t" style="left:1088px;top:174.72px;font-size:13.8px;color:#fff;">CPU Package</div><div class="t" style="left:1170px;width:150px;text-align:right;top:174.72px;font-size:13.8px;color:#fff;">77,00 °C</div><svg style="position:absolute;left:1327.2px;top:172.5px" width="16" height="16" viewBox="0 0 16 16" ><circle cx="8" cy="8" r="8" fill="#00bfff"/><rect x="7.4" y="8.2" width="1.2" height="4.4" rx=".6" fill="#0b78a0"/><circle cx="8" cy="5.3" r=".75" fill="#0b78a0"/></svg><svg style="position:absolute;left:1059px;top:166px;overflow:hidden" width="284" height="185" viewBox="0 0 284 185"><polygon points="0.0,184 0.0,59.9 5.7,64.3 11.5,60.4 17.4,64.3 22.5,59.9 28.3,59.9 34.1,58.1 39.3,68.0 45.8,63.3 51.7,59.9 56.8,59.9 62.6,64.3 68.5,60.4 73.6,64.3 80.1,59.9 90.4,59.9 96.2,68.3 102.0,61.4 107.9,59.9 113.7,61.0 119.5,64.3 130.5,64.3 136.3,60.4 141.4,64.3 147.3,60.4 153.1,63.6 159.7,60.4 164.8,64.3 170.6,60.4 175.8,63.6 181.6,60.4 187.4,63.6 193.3,60.7 198.4,68.3 204.2,60.4 210.8,64.3 215.9,64.3 221.7,68.3 227.6,60.4 232.7,64.8 238.5,63.3 244.4,64.3 249.5,60.4 255.3,63.3 261.2,71.6 266.3,63.3 272.1,69.4 283.8,60.4 283.8,184" fill="#154e63"/><rect x="0" y="102.5" width="284" height="2" fill="#ffffff" opacity="0.2"/><rect x="0" y="183.0" width="284" height="2" fill="#ffffff" opacity="0.2"/><polyline points="0.0,59.9 5.7,64.3 11.5,60.4 17.4,64.3 22.5,59.9 28.3,59.9 34.1,58.1 39.3,68.0 45.8,63.3 51.7,59.9 56.8,59.9 62.6,64.3 68.5,60.4 73.6,64.3 80.1,59.9 90.4,59.9 96.2,68.3 102.0,61.4 107.9,59.9 113.7,61.0 119.5,64.3 130.5,64.3 136.3,60.4 141.4,64.3 147.3,60.4 153.1,63.6 159.7,60.4 164.8,64.3 170.6,60.4 175.8,63.6 181.6,60.4 187.4,63.6 193.3,60.7 198.4,68.3 204.2,60.4 210.8,64.3 215.9,64.3 221.7,68.3 227.6,60.4 232.7,64.8 238.5,63.3 244.4,64.3 249.5,60.4 255.3,63.3 261.2,71.6 266.3,63.3 272.1,69.4 283.8,60.4" fill="none" stroke="#00bfff" stroke-width="2.2" stroke-linejoin="round"/></svg><div class="t" style="left:995px;width:60px;text-align:right;top:263.52px;font-size:12.5px;color:#fff;letter-spacing:-0.3px;">50</div><div class="t" style="left:995px;width:60px;text-align:right;top:344.02px;font-size:12.5px;color:#fff;letter-spacing:-0.3px;">0</div><div class="a" style="left:1361px;top:166px;width:318px;height:200px;background:#1c1c1f"></div><div class="a" style="left:1361px;top:166px;width:318px;height:30px;background:#0b78a0"></div><svg style="position:absolute;left:1366px;top:175.2px" width="20" height="12" viewBox="0 0 20 12" ><rect x="0" y="0.3" width="1.5" height="10.6" fill="#fff"/><rect x="2.2" y="0.3" width="17.8" height="8.2" fill="#fff"/><rect x="4" y="8" width="7.8" height="2.4" fill="#fff"/><circle cx="7" cy="4.4" r="2.55" fill="none" stroke="#0b78a0" stroke-width="1.7"/><circle cx="15.3" cy="4.4" r="2.55" fill="none" stroke="#0b78a0" stroke-width="1.7"/></svg><svg style="position:absolute;left:1391px;top:172px" width="20" height="20" viewBox="0 0 16 16" ><g fill="none" stroke="#fff"><path d="M7.5 1.4 V10.5" stroke-width="2" stroke-linecap="round"/><path d="M8.4 2.4 H11.2 M8.4 5.4 H11.2 M8.4 8.2 H11.2" stroke-width="1.3"/><path d="M0.9 9.9 Q3 12.7 5.1 9.9 M10.3 9.9 Q12.5 12.7 14.8 9.9" stroke-width="1.4"/><path d="M0.9 13.4 Q3.4 16.4 5.8 13.4 Q8.2 16.4 10.6 13.4 Q13 16.4 15.3 13.4" stroke-width="1.4" stroke-linejoin="bevel"/></g><circle cx="7.5" cy="11" r="1.9" fill="#fff"/></svg><div class="t" style="left:1416px;top:174.72px;font-size:13.8px;color:#fff;">GPU Temperature</div><div class="t" style="left:1498px;width:150px;text-align:right;top:174.72px;font-size:13.8px;color:#fff;">32,03 °C</div><svg style="position:absolute;left:1655.2px;top:172.5px" width="16" height="16" viewBox="0 0 16 16" ><circle cx="8" cy="8" r="8" fill="#00bfff"/><rect x="7.4" y="8.2" width="1.2" height="4.4" rx=".6" fill="#0b78a0"/><circle cx="8" cy="5.3" r=".75" fill="#0b78a0"/></svg><svg style="position:absolute;left:1386.5px;top:166px;overflow:hidden" width="284.5" height="185" viewBox="0 0 284.5 185"><polygon points="0.3,184 0.3,65.4 80.6,65.4 95.2,65.4 104.0,66.5 109.8,66.5 114.2,65.1 124.4,65.1 131.0,66.5 166.8,66.5 172.6,65.1 177.0,65.1 182.1,66.5 187.9,66.5 193.8,65.4 200.3,65.1 204.7,66.5 216.4,66.5 225.9,59.2 228.1,61.4 233.9,59.2 239.8,65.8 244.9,58.1 249.2,59.5 256.5,64.3 261.7,65.4 284.3,65.4 284.3,184" fill="#154e63"/><rect x="0" y="109.3" width="284.5" height="2" fill="#ffffff" opacity="0.2"/><rect x="0" y="183.0" width="284.5" height="2" fill="#ffffff" opacity="0.2"/><polyline points="0.3,65.4 80.6,65.4 95.2,65.4 104.0,66.5 109.8,66.5 114.2,65.1 124.4,65.1 131.0,66.5 166.8,66.5 172.6,65.1 177.0,65.1 182.1,66.5 187.9,66.5 193.8,65.4 200.3,65.1 204.7,66.5 216.4,66.5 225.9,59.2 228.1,61.4 233.9,59.2 239.8,65.8 244.9,58.1 249.2,59.5 256.5,64.3 261.7,65.4 284.3,65.4" fill="none" stroke="#00bfff" stroke-width="2.2" stroke-linejoin="round"/></svg><div class="t" style="left:1322.5px;width:60px;text-align:right;top:270.32px;font-size:12.5px;color:#fff;letter-spacing:-0.3px;">20</div><div class="t" style="left:1322.5px;width:60px;text-align:right;top:344.02px;font-size:12.5px;color:#fff;letter-spacing:-0.3px;">0</div><div class="a" style="left:1689px;top:166px;width:318px;height:200px;background:#1c1c1f"></div><div class="a" style="left:1689px;top:166px;width:318px;height:30px;background:#0a52a0"></div><svg style="position:absolute;left:1694px;top:171px" width="20" height="20" viewBox="0 0 20 20" ><rect x="0" y="0" width="20" height="20" fill="#fff"/><rect x="3.5" y="2.2" width="7" height="7" fill="none" stroke="#0a52a0" stroke-width="1.6"/><rect x="12.5" y="2" width="1.2" height="8.5" fill="#0a52a0"/><rect x="14.5" y="2" width="1.8" height="8.5" fill="#0a52a0" opacity=".6"/><rect x="17.3" y="3.5" width="1.2" height="3.5" fill="#0a52a0"/><rect x="0" y="2" width="1.6" height="6" fill="#0a52a0" opacity=".8"/><rect x="2.2" y="12" width="10" height="1.2" fill="#0a52a0"/><rect x="2.2" y="14.5" width="10" height="1.8" fill="#0a52a0" opacity=".6"/><rect x="2.2" y="17" width="10" height="1.2" fill="#0a52a0"/><rect x="15" y="12.5" width="2.8" height="2.2" fill="none" stroke="#0a52a0" stroke-width="1"/><rect x="15" y="16" width="2.8" height="2.2" fill="none" stroke="#0a52a0" stroke-width="1"/></svg><svg style="position:absolute;left:1721px;top:172.7px" width="18" height="17" viewBox="0 0 18 17" ><rect x="1.9" y="0" width="5.4" height="3" rx="1" fill="#fff"/><rect x="0" y="2.2" width="10" height="14.1" rx="1.2" fill="#fff"/><rect x="1.3" y="3.5" width="6.6" height="5.5" fill="#0a52a0"/><path d="M14.2 2.1 H16.7 L15.1 7.4 H17.3 L13.3 16.2 L14 10 H11 Z" fill="#fff"/></svg><div class="t" style="left:1744px;top:174.72px;font-size:13.8px;color:#fff;">+12V</div><div class="t" style="left:1826px;width:150px;text-align:right;top:174.72px;font-size:13.8px;color:#fff;">12,024 V</div><svg style="position:absolute;left:1983.2px;top:172.5px" width="16" height="16" viewBox="0 0 16 16" ><circle cx="8" cy="8" r="8" fill="#00bfff"/><rect x="7.4" y="8.2" width="1.2" height="4.4" rx=".6" fill="#0a52a0"/><circle cx="8" cy="5.3" r=".75" fill="#0a52a0"/></svg><svg style="position:absolute;left:1715px;top:166px;overflow:hidden" width="284" height="185" viewBox="0 0 284 185"><polygon points="0.0,184 0.0,58.5 215.9,58.5 224.7,59.5 233.4,59.5 239.3,58.1 246.6,59.7 255.3,58.5 283.8,58.5 283.8,184" fill="#153862"/><rect x="0" y="78.8" width="284" height="2" fill="#ffffff" opacity="0.2"/><rect x="0" y="130.9" width="284" height="2" fill="#ffffff" opacity="0.2"/><rect x="0" y="183.0" width="284" height="2" fill="#ffffff" opacity="0.2"/><polyline points="0.0,58.5 215.9,58.5 224.7,59.5 233.4,59.5 239.3,58.1 246.6,59.7 255.3,58.5 283.8,58.5" fill="none" stroke="#1789f5" stroke-width="2.2" stroke-linejoin="round"/></svg><div class="t" style="left:1651px;width:60px;text-align:right;top:239.82px;font-size:12.5px;color:#fff;letter-spacing:-0.3px;">10</div><div class="t" style="left:1651px;width:60px;text-align:right;top:291.92px;font-size:12.5px;color:#fff;letter-spacing:-0.3px;">5</div><div class="t" style="left:1651px;width:60px;text-align:right;top:344.02px;font-size:12.5px;color:#fff;letter-spacing:-0.3px;">0</div><div class="a" style="left:705px;top:376px;width:318px;height:200px;background:#1c1c1f"></div><div class="a" style="left:705px;top:376px;width:318px;height:30px;background:#0a52a0"></div><svg style="position:absolute;left:710px;top:381px" width="20" height="20" viewBox="0 0 20 20" ><rect x="0" y="0" width="20" height="20" fill="#fff"/><rect x="3.5" y="2.2" width="7" height="7" fill="none" stroke="#0a52a0" stroke-width="1.6"/><rect x="12.5" y="2" width="1.2" height="8.5" fill="#0a52a0"/><rect x="14.5" y="2" width="1.8" height="8.5" fill="#0a52a0" opacity=".6"/><rect x="17.3" y="3.5" width="1.2" height="3.5" fill="#0a52a0"/><rect x="0" y="2" width="1.6" height="6" fill="#0a52a0" opacity=".8"/><rect x="2.2" y="12" width="10" height="1.2" fill="#0a52a0"/><rect x="2.2" y="14.5" width="10" height="1.8" fill="#0a52a0" opacity=".6"/><rect x="2.2" y="17" width="10" height="1.2" fill="#0a52a0"/><rect x="15" y="12.5" width="2.8" height="2.2" fill="none" stroke="#0a52a0" stroke-width="1"/><rect x="15" y="16" width="2.8" height="2.2" fill="none" stroke="#0a52a0" stroke-width="1"/></svg><svg style="position:absolute;left:737px;top:382.7px" width="18" height="17" viewBox="0 0 18 17" ><rect x="1.9" y="0" width="5.4" height="3" rx="1" fill="#fff"/><rect x="0" y="2.2" width="10" height="14.1" rx="1.2" fill="#fff"/><rect x="1.3" y="3.5" width="6.6" height="5.5" fill="#0a52a0"/><path d="M14.2 2.1 H16.7 L15.1 7.4 H17.3 L13.3 16.2 L14 10 H11 Z" fill="#fff"/></svg><div class="t" style="left:760px;top:384.72px;font-size:13.8px;color:#fff;">+5V</div><div class="t" style="left:842px;width:150px;text-align:right;top:384.72px;font-size:13.8px;color:#fff;">5,010 V</div><svg style="position:absolute;left:999.2px;top:382.5px" width="16" height="16" viewBox="0 0 16 16" ><circle cx="8" cy="8" r="8" fill="#00bfff"/><rect x="7.4" y="8.2" width="1.2" height="4.4" rx=".6" fill="#0a52a0"/><circle cx="8" cy="5.3" r=".75" fill="#0a52a0"/></svg><svg style="position:absolute;left:725px;top:376px;overflow:hidden" width="290" height="185" viewBox="0 0 290 185"><polygon points="0.0,184 0.0,58.5 290.0,58.5 290.0,184" fill="#153862"/><rect x="0" y="82.6" width="290" height="2" fill="#ffffff" opacity="0.2"/><rect x="0" y="133.0" width="290" height="2" fill="#ffffff" opacity="0.2"/><rect x="0" y="183.0" width="290" height="2" fill="#ffffff" opacity="0.2"/><polyline points="0.0,58.5 290.0,58.5" fill="none" stroke="#1789f5" stroke-width="2.2" stroke-linejoin="round"/></svg><div class="t" style="left:661px;width:60px;text-align:right;top:453.62px;font-size:12.5px;color:#fff;letter-spacing:-0.3px;">4</div><div class="t" style="left:661px;width:60px;text-align:right;top:504.02px;font-size:12.5px;color:#fff;letter-spacing:-0.3px;">2</div><div class="t" style="left:661px;width:60px;text-align:right;top:554.02px;font-size:12.5px;color:#fff;letter-spacing:-0.3px;">0</div><div class="a" style="left:1033px;top:376px;width:318px;height:200px;background:#1c1c1f"></div><div class="a" style="left:1033px;top:376px;width:318px;height:30px;background:#0a52a0"></div><svg style="position:absolute;left:1038px;top:385.2px" width="20" height="12" viewBox="0 0 20 12" ><rect x="0" y="0.3" width="1.5" height="10.6" fill="#fff"/><rect x="2.2" y="0.3" width="17.8" height="8.2" fill="#fff"/><rect x="4" y="8" width="7.8" height="2.4" fill="#fff"/><circle cx="7" cy="4.4" r="2.55" fill="none" stroke="#0a52a0" stroke-width="1.7"/><circle cx="15.3" cy="4.4" r="2.55" fill="none" stroke="#0a52a0" stroke-width="1.7"/></svg><svg style="position:absolute;left:1065px;top:382.7px" width="18" height="17" viewBox="0 0 18 17" ><rect x="1.9" y="0" width="5.4" height="3" rx="1" fill="#fff"/><rect x="0" y="2.2" width="10" height="14.1" rx="1.2" fill="#fff"/><rect x="1.3" y="3.5" width="6.6" height="5.5" fill="#0a52a0"/><path d="M14.2 2.1 H16.7 L15.1 7.4 H17.3 L13.3 16.2 L14 10 H11 Z" fill="#fff"/></svg><div class="t" style="left:1088px;top:384.72px;font-size:13.8px;color:#fff;">GPU Core Voltage</div><div class="t" style="left:1170px;width:150px;text-align:right;top:384.72px;font-size:13.8px;color:#fff;">0,656 V</div><svg style="position:absolute;left:1327.2px;top:382.5px" width="16" height="16" viewBox="0 0 16 16" ><circle cx="8" cy="8" r="8" fill="#00bfff"/><rect x="7.4" y="8.2" width="1.2" height="4.4" rx=".6" fill="#0a52a0"/><circle cx="8" cy="5.3" r=".75" fill="#0a52a0"/></svg><svg style="position:absolute;left:1062px;top:376px;overflow:hidden" width="281" height="185" viewBox="0 0 281 185"><polygon points="0.1,184 0.1,79.4 212.9,79.4 222.1,58.9 224.6,79.4 230.4,58.9 237.7,79.4 241.7,58.9 247.9,79.4 280.8,79.4 280.8,184" fill="#153862"/><rect x="0" y="103.4" width="281" height="2" fill="#ffffff" opacity="0.2"/><rect x="0" y="183.0" width="281" height="2" fill="#ffffff" opacity="0.2"/><polyline points="0.1,79.4 212.9,79.4 222.1,58.9 224.6,79.4 230.4,58.9 237.7,79.4 241.7,58.9 247.9,79.4 280.8,79.4" fill="none" stroke="#1789f5" stroke-width="2.2" stroke-linejoin="round"/></svg><div class="t" style="left:998px;width:60px;text-align:right;top:474.42px;font-size:12.5px;color:#fff;letter-spacing:-0.3px;">0,5</div><div class="t" style="left:998px;width:60px;text-align:right;top:554.02px;font-size:12.5px;color:#fff;letter-spacing:-0.3px;">0</div><div class="a" style="left:1361px;top:376px;width:318px;height:200px;background:#1c1c1f"></div><div class="a" style="left:1361px;top:376px;width:318px;height:30px;background:#1038a0"></div><svg style="position:absolute;left:1369px;top:384px" width="14" height="14" viewBox="0 0 14 14" ><rect x="1" y="1" width="12" height="12" fill="none" stroke="#fff" stroke-width="2"/><rect x="4" y="4" width="6" height="6" fill="#fff"/></svg><svg style="position:absolute;left:1396px;top:383px" width="10" height="16" viewBox="0 0 10 16" ><rect x="1.6" y="0" width="1.4" height="4" rx=".6" fill="#fff"/><rect x="6.9" y="0" width="1.4" height="4" rx=".6" fill="#fff"/><path d="M0 4.5 Q0 3.6 1 3.6 H9 Q10 3.6 10 4.5 V10 L7 13 V15.8 H3 V13 L0 10 Z" fill="#fff"/></svg><div class="t" style="left:1416px;top:384.72px;font-size:13.8px;color:#fff;">CPU Package Power</div><div class="t" style="left:1498px;width:150px;text-align:right;top:384.72px;font-size:13.8px;color:#fff;">138,09 W</div><svg style="position:absolute;left:1655.2px;top:382.5px" width="16" height="16" viewBox="0 0 16 16" ><circle cx="8" cy="8" r="8" fill="#00bfff"/><rect x="7.4" y="8.2" width="1.2" height="4.4" rx=".6" fill="#1038a0"/><circle cx="8" cy="5.3" r=".75" fill="#1038a0"/></svg><svg style="position:absolute;left:1393px;top:376px;overflow:hidden" width="278" height="185" viewBox="0 0 278 185"><polygon points="0.4,184 0.4,70.2 5.5,65.1 11.4,62.4 16.5,70.2 22.3,67.2 27.4,62.4 33.3,68.3 38.4,62.4 44.2,65.4 49.3,61.4 55.9,66.5 61.7,68.3 67.6,69.4 72.7,69.4 77.1,61.4 83.6,69.4 88.7,61.4 94.6,62.1 100.4,65.8 105.5,68.7 111.4,65.8 116.5,61.4 122.3,67.2 127.4,63.3 133.3,70.6 138.4,66.5 144.2,70.2 150.0,76.0 155.2,63.3 161.0,65.1 166.1,59.2 172.7,64.8 177.8,73.1 183.6,64.3 189.5,61.4 194.6,59.9 200.4,66.5 206.2,64.3 211.4,58.5 216.5,68.0 222.3,69.4 227.4,63.9 233.3,63.3 239.1,69.4 244.9,65.1 250.8,62.4 255.9,66.5 261.7,62.4 266.8,65.8 272.7,67.7 277.8,61.4 277.8,184" fill="#17295f"/><rect x="0" y="93.7" width="278" height="2" fill="#ffffff" opacity="0.2"/><rect x="0" y="183.0" width="278" height="2" fill="#ffffff" opacity="0.2"/><polyline points="0.4,70.2 5.5,65.1 11.4,62.4 16.5,70.2 22.3,67.2 27.4,62.4 33.3,68.3 38.4,62.4 44.2,65.4 49.3,61.4 55.9,66.5 61.7,68.3 67.6,69.4 72.7,69.4 77.1,61.4 83.6,69.4 88.7,61.4 94.6,62.1 100.4,65.8 105.5,68.7 111.4,65.8 116.5,61.4 122.3,67.2 127.4,63.3 133.3,70.6 138.4,66.5 144.2,70.2 150.0,76.0 155.2,63.3 161.0,65.1 166.1,59.2 172.7,64.8 177.8,73.1 183.6,64.3 189.5,61.4 194.6,59.9 200.4,66.5 206.2,64.3 211.4,58.5 216.5,68.0 222.3,69.4 227.4,63.9 233.3,63.3 239.1,69.4 244.9,65.1 250.8,62.4 255.9,66.5 261.7,62.4 266.8,65.8 272.7,67.7 277.8,61.4" fill="none" stroke="#1f5eff" stroke-width="2.2" stroke-linejoin="round"/></svg><div class="t" style="left:1329px;width:60px;text-align:right;top:464.72px;font-size:12.5px;color:#fff;letter-spacing:-0.3px;">100</div><div class="t" style="left:1329px;width:60px;text-align:right;top:554.02px;font-size:12.5px;color:#fff;letter-spacing:-0.3px;">0</div><div class="a" style="left:1689px;top:376px;width:318px;height:200px;background:#1c1c1f"></div><div class="a" style="left:1689px;top:376px;width:318px;height:30px;background:#1038a0"></div><svg style="position:absolute;left:1694px;top:385.2px" width="20" height="12" viewBox="0 0 20 12" ><rect x="0" y="0.3" width="1.5" height="10.6" fill="#fff"/><rect x="2.2" y="0.3" width="17.8" height="8.2" fill="#fff"/><rect x="4" y="8" width="7.8" height="2.4" fill="#fff"/><circle cx="7" cy="4.4" r="2.55" fill="none" stroke="#1038a0" stroke-width="1.7"/><circle cx="15.3" cy="4.4" r="2.55" fill="none" stroke="#1038a0" stroke-width="1.7"/></svg><svg style="position:absolute;left:1724px;top:383px" width="10" height="16" viewBox="0 0 10 16" ><rect x="1.6" y="0" width="1.4" height="4" rx=".6" fill="#fff"/><rect x="6.9" y="0" width="1.4" height="4" rx=".6" fill="#fff"/><path d="M0 4.5 Q0 3.6 1 3.6 H9 Q10 3.6 10 4.5 V10 L7 13 V15.8 H3 V13 L0 10 Z" fill="#fff"/></svg><div class="t" style="left:1744px;top:384.72px;font-size:13.8px;color:#fff;">GPU Power</div><div class="t" style="left:1826px;width:150px;text-align:right;top:384.72px;font-size:13.8px;color:#fff;">21,91 W</div><svg style="position:absolute;left:1983.2px;top:382.5px" width="16" height="16" viewBox="0 0 16 16" ><circle cx="8" cy="8" r="8" fill="#00bfff"/><rect x="7.4" y="8.2" width="1.2" height="4.4" rx=".6" fill="#1038a0"/><circle cx="8" cy="5.3" r=".75" fill="#1038a0"/></svg><svg style="position:absolute;left:1715px;top:376px;overflow:hidden" width="284" height="185" viewBox="0 0 284 185"><polygon points="1.0,184 1.0,126.4 18.1,126.4 23.2,124.9 29.0,126.4 52.4,126.4 57.5,124.9 68.5,126.7 74.3,124.9 81.6,126.4 148.7,126.4 159.0,124.2 167.7,126.7 199.8,126.4 204.2,124.9 210.1,126.4 216.6,126.4 225.4,65.1 227.6,63.3 233.4,65.8 239.3,124.9 244.4,58.9 250.9,73.8 256.0,126.4 272.8,126.4 278.7,124.9 283.8,126.4 283.8,184" fill="#17295f"/><rect x="0" y="77.5" width="284" height="2" fill="#ffffff" opacity="0.2"/><rect x="0" y="130.2" width="284" height="2" fill="#ffffff" opacity="0.2"/><rect x="0" y="183.0" width="284" height="2" fill="#ffffff" opacity="0.2"/><polyline points="1.0,126.4 18.1,126.4 23.2,124.9 29.0,126.4 52.4,126.4 57.5,124.9 68.5,126.7 74.3,124.9 81.6,126.4 148.7,126.4 159.0,124.2 167.7,126.7 199.8,126.4 204.2,124.9 210.1,126.4 216.6,126.4 225.4,65.1 227.6,63.3 233.4,65.8 239.3,124.9 244.4,58.9 250.9,73.8 256.0,126.4 272.8,126.4 278.7,124.9 283.8,126.4" fill="none" stroke="#1f5eff" stroke-width="2.2" stroke-linejoin="round"/></svg><div class="t" style="left:1651px;width:60px;text-align:right;top:448.52px;font-size:12.5px;color:#fff;letter-spacing:-0.3px;">40</div><div class="t" style="left:1651px;width:60px;text-align:right;top:501.22px;font-size:12.5px;color:#fff;letter-spacing:-0.3px;">20</div><div class="t" style="left:1651px;width:60px;text-align:right;top:554.02px;font-size:12.5px;color:#fff;letter-spacing:-0.3px;">0</div><div class="a" style="left:705px;top:586px;width:318px;height:200px;background:#1c1c1f"></div><div class="a" style="left:705px;top:586px;width:318px;height:30px;background:#4a0d8a"></div><svg style="position:absolute;left:710px;top:591px" width="20" height="20" viewBox="0 0 20 20" ><rect x="0" y="0" width="20" height="20" fill="#fff"/><rect x="3.5" y="2.2" width="7" height="7" fill="none" stroke="#4a0d8a" stroke-width="1.6"/><rect x="12.5" y="2" width="1.2" height="8.5" fill="#4a0d8a"/><rect x="14.5" y="2" width="1.8" height="8.5" fill="#4a0d8a" opacity=".6"/><rect x="17.3" y="3.5" width="1.2" height="3.5" fill="#4a0d8a"/><rect x="0" y="2" width="1.6" height="6" fill="#4a0d8a" opacity=".8"/><rect x="2.2" y="12" width="10" height="1.2" fill="#4a0d8a"/><rect x="2.2" y="14.5" width="10" height="1.8" fill="#4a0d8a" opacity=".6"/><rect x="2.2" y="17" width="10" height="1.2" fill="#4a0d8a"/><rect x="15" y="12.5" width="2.8" height="2.2" fill="none" stroke="#4a0d8a" stroke-width="1"/><rect x="15" y="16" width="2.8" height="2.2" fill="none" stroke="#4a0d8a" stroke-width="1"/></svg><svg style="position:absolute;left:736px;top:592px" width="18" height="18" viewBox="0 0 18 18" ><path transform="rotate(0 9 9)" d="M8.9 9.3 L6.9 5.7 A3.1 3.1 0 1 1 12.6 5.6 Q11 6.6 10.4 8.9 Z" fill="#fff"/><path transform="rotate(90 9 9)" d="M8.9 9.3 L6.9 5.7 A3.1 3.1 0 1 1 12.6 5.6 Q11 6.6 10.4 8.9 Z" fill="#fff"/><path transform="rotate(180 9 9)" d="M8.9 9.3 L6.9 5.7 A3.1 3.1 0 1 1 12.6 5.6 Q11 6.6 10.4 8.9 Z" fill="#fff"/><path transform="rotate(270 9 9)" d="M8.9 9.3 L6.9 5.7 A3.1 3.1 0 1 1 12.6 5.6 Q11 6.6 10.4 8.9 Z" fill="#fff"/><circle cx="9" cy="9" r="1.6" fill="#fff"/><circle cx="9" cy="9" r="0.8" fill="#4a0d8a" opacity=".5"/></svg><div class="t" style="left:760px;top:594.72px;font-size:13.8px;color:#fff;">CPU</div><div class="t" style="left:842px;width:150px;text-align:right;top:594.72px;font-size:13.8px;color:#fff;">2058 rpm</div><svg style="position:absolute;left:999.2px;top:592.5px" width="16" height="16" viewBox="0 0 16 16" ><circle cx="8" cy="8" r="8" fill="#00bfff"/><rect x="7.4" y="8.2" width="1.2" height="4.4" rx=".6" fill="#4a0d8a"/><circle cx="8" cy="5.3" r=".75" fill="#4a0d8a"/></svg><svg style="position:absolute;left:744px;top:586px;overflow:hidden" width="271" height="185" viewBox="0 0 271 185"><polygon points="0.0,184 0.0,58.5 8.0,58.5 16.8,61.8 35.7,61.8 37.9,62.9 43.8,61.8 49.6,61.8 54.7,58.5 62.8,58.5 65.7,61.4 71.5,59.2 75.9,59.2 81.7,62.9 90.5,61.8 93.4,62.9 97.8,61.8 103.6,58.5 113.1,58.5 119.7,62.9 125.5,59.2 131.4,58.5 135.7,61.8 140.1,61.8 146.7,58.5 152.5,61.8 157.6,61.8 162.8,59.2 167.9,61.4 173.0,62.9 178.1,58.5 189.8,58.5 196.3,59.9 201.4,61.8 206.5,62.9 214.6,61.8 227.7,61.8 233.6,58.5 237.9,60.4 243.8,61.8 249.6,58.1 255.5,59.2 260.6,61.8 265.7,59.9 270.8,61.4 270.8,184" fill="#331657"/><rect x="0" y="63.8" width="271" height="2" fill="#ffffff" opacity="0.2"/><rect x="0" y="123.3" width="271" height="2" fill="#ffffff" opacity="0.2"/><rect x="0" y="183.0" width="271" height="2" fill="#ffffff" opacity="0.2"/><polyline points="0.0,58.5 8.0,58.5 16.8,61.8 35.7,61.8 37.9,62.9 43.8,61.8 49.6,61.8 54.7,58.5 62.8,58.5 65.7,61.4 71.5,59.2 75.9,59.2 81.7,62.9 90.5,61.8 93.4,62.9 97.8,61.8 103.6,58.5 113.1,58.5 119.7,62.9 125.5,59.2 131.4,58.5 135.7,61.8 140.1,61.8 146.7,58.5 152.5,61.8 157.6,61.8 162.8,59.2 167.9,61.4 173.0,62.9 178.1,58.5 189.8,58.5 196.3,59.9 201.4,61.8 206.5,62.9 214.6,61.8 227.7,61.8 233.6,58.5 237.9,60.4 243.8,61.8 249.6,58.1 255.5,59.2 260.6,61.8 265.7,59.9 270.8,61.4" fill="none" stroke="#7e1cff" stroke-width="2.2" stroke-linejoin="round"/></svg><div class="t" style="left:680px;width:60px;text-align:right;top:644.82px;font-size:12.5px;color:#fff;letter-spacing:-0.3px;">2000</div><div class="t" style="left:680px;width:60px;text-align:right;top:704.32px;font-size:12.5px;color:#fff;letter-spacing:-0.3px;">1000</div><div class="t" style="left:680px;width:60px;text-align:right;top:764.02px;font-size:12.5px;color:#fff;letter-spacing:-0.3px;">0</div><div class="a" style="left:1033px;top:586px;width:318px;height:200px;background:#1c1c1f"></div><div class="a" style="left:1033px;top:586px;width:318px;height:30px;background:#4a0d8a"></div><svg style="position:absolute;left:1038px;top:595.2px" width="20" height="12" viewBox="0 0 20 12" ><rect x="0" y="0.3" width="1.5" height="10.6" fill="#fff"/><rect x="2.2" y="0.3" width="17.8" height="8.2" fill="#fff"/><rect x="4" y="8" width="7.8" height="2.4" fill="#fff"/><circle cx="7" cy="4.4" r="2.55" fill="none" stroke="#4a0d8a" stroke-width="1.7"/><circle cx="15.3" cy="4.4" r="2.55" fill="none" stroke="#4a0d8a" stroke-width="1.7"/></svg><svg style="position:absolute;left:1064px;top:592px" width="18" height="18" viewBox="0 0 18 18" ><path transform="rotate(0 9 9)" d="M8.9 9.3 L6.9 5.7 A3.1 3.1 0 1 1 12.6 5.6 Q11 6.6 10.4 8.9 Z" fill="#fff"/><path transform="rotate(90 9 9)" d="M8.9 9.3 L6.9 5.7 A3.1 3.1 0 1 1 12.6 5.6 Q11 6.6 10.4 8.9 Z" fill="#fff"/><path transform="rotate(180 9 9)" d="M8.9 9.3 L6.9 5.7 A3.1 3.1 0 1 1 12.6 5.6 Q11 6.6 10.4 8.9 Z" fill="#fff"/><path transform="rotate(270 9 9)" d="M8.9 9.3 L6.9 5.7 A3.1 3.1 0 1 1 12.6 5.6 Q11 6.6 10.4 8.9 Z" fill="#fff"/><circle cx="9" cy="9" r="1.6" fill="#fff"/><circle cx="9" cy="9" r="0.8" fill="#4a0d8a" opacity=".5"/></svg><div class="t" style="left:1088px;top:594.72px;font-size:13.8px;color:#fff;">GPU Fan1</div><div class="t" style="left:1170px;width:150px;text-align:right;top:594.72px;font-size:13.8px;color:#fff;">0 rpm</div><svg style="position:absolute;left:1327.2px;top:592.5px" width="16" height="16" viewBox="0 0 16 16" ><circle cx="8" cy="8" r="8" fill="#00bfff"/><rect x="7.4" y="8.2" width="1.2" height="4.4" rx=".6" fill="#4a0d8a"/><circle cx="8" cy="5.3" r=".75" fill="#4a0d8a"/></svg><svg style="position:absolute;left:1065px;top:586px;overflow:hidden" width="278" height="185" viewBox="0 0 278 185"><polygon points="0.0,184 0.0,184.0 278.0,184.0 278.0,184" fill="#331657"/><rect x="0" y="45.0" width="278" height="2" fill="#ffffff" opacity="0.2"/><rect x="0" y="114.0" width="278" height="2" fill="#ffffff" opacity="0.2"/><rect x="0" y="183.0" width="278" height="2" fill="#ffffff" opacity="0.2"/><polyline points="0.0,184.0 278.0,184.0" fill="none" stroke="#7e1cff" stroke-width="2.2" stroke-linejoin="round"/></svg><div class="t" style="left:1001px;width:60px;text-align:right;top:626.02px;font-size:12.5px;color:#fff;letter-spacing:-0.3px;">100</div><div class="t" style="left:1001px;width:60px;text-align:right;top:695.02px;font-size:12.5px;color:#fff;letter-spacing:-0.3px;">50</div><div class="t" style="left:1001px;width:60px;text-align:right;top:764.02px;font-size:12.5px;color:#fff;letter-spacing:-0.3px;">0</div><div class="a" style="left:1361px;top:586px;width:318px;height:200px;background:#1c1c1f"></div><div class="a" style="left:1361px;top:586px;width:318px;height:30px;background:#4a0d8a"></div><svg style="position:absolute;left:1366px;top:595.2px" width="20" height="12" viewBox="0 0 20 12" ><rect x="0" y="0.3" width="1.5" height="10.6" fill="#fff"/><rect x="2.2" y="0.3" width="17.8" height="8.2" fill="#fff"/><rect x="4" y="8" width="7.8" height="2.4" fill="#fff"/><circle cx="7" cy="4.4" r="2.55" fill="none" stroke="#4a0d8a" stroke-width="1.7"/><circle cx="15.3" cy="4.4" r="2.55" fill="none" stroke="#4a0d8a" stroke-width="1.7"/></svg><svg style="position:absolute;left:1392px;top:592px" width="18" height="18" viewBox="0 0 18 18" ><path transform="rotate(0 9 9)" d="M8.9 9.3 L6.9 5.7 A3.1 3.1 0 1 1 12.6 5.6 Q11 6.6 10.4 8.9 Z" fill="#fff"/><path transform="rotate(90 9 9)" d="M8.9 9.3 L6.9 5.7 A3.1 3.1 0 1 1 12.6 5.6 Q11 6.6 10.4 8.9 Z" fill="#fff"/><path transform="rotate(180 9 9)" d="M8.9 9.3 L6.9 5.7 A3.1 3.1 0 1 1 12.6 5.6 Q11 6.6 10.4 8.9 Z" fill="#fff"/><path transform="rotate(270 9 9)" d="M8.9 9.3 L6.9 5.7 A3.1 3.1 0 1 1 12.6 5.6 Q11 6.6 10.4 8.9 Z" fill="#fff"/><circle cx="9" cy="9" r="1.6" fill="#fff"/><circle cx="9" cy="9" r="0.8" fill="#4a0d8a" opacity=".5"/></svg><div class="t" style="left:1416px;top:594.72px;font-size:13.8px;color:#fff;">GPU Fan2</div><div class="t" style="left:1498px;width:150px;text-align:right;top:594.72px;font-size:13.8px;color:#fff;">0 rpm</div><svg style="position:absolute;left:1655.2px;top:592.5px" width="16" height="16" viewBox="0 0 16 16" ><circle cx="8" cy="8" r="8" fill="#00bfff"/><rect x="7.4" y="8.2" width="1.2" height="4.4" rx=".6" fill="#4a0d8a"/><circle cx="8" cy="5.3" r=".75" fill="#4a0d8a"/></svg><svg style="position:absolute;left:1393px;top:586px;overflow:hidden" width="278" height="185" viewBox="0 0 278 185"><polygon points="0.0,184 0.0,184.0 278.0,184.0 278.0,184" fill="#331657"/><rect x="0" y="45.0" width="278" height="2" fill="#ffffff" opacity="0.2"/><rect x="0" y="114.0" width="278" height="2" fill="#ffffff" opacity="0.2"/><rect x="0" y="183.0" width="278" height="2" fill="#ffffff" opacity="0.2"/><polyline points="0.0,184.0 278.0,184.0" fill="none" stroke="#7e1cff" stroke-width="2.2" stroke-linejoin="round"/></svg><div class="t" style="left:1329px;width:60px;text-align:right;top:626.02px;font-size:12.5px;color:#fff;letter-spacing:-0.3px;">100</div><div class="t" style="left:1329px;width:60px;text-align:right;top:695.02px;font-size:12.5px;color:#fff;letter-spacing:-0.3px;">50</div><div class="t" style="left:1329px;width:60px;text-align:right;top:764.02px;font-size:12.5px;color:#fff;letter-spacing:-0.3px;">0</div><div class="a" style="left:1689px;top:586px;width:318px;height:200px;background:#1c1c1f"></div><div class="a" style="left:1689px;top:586px;width:318px;height:30px;background:#8a316b"></div><svg style="position:absolute;left:1697px;top:594px" width="14" height="14" viewBox="0 0 14 14" ><rect x="1" y="1" width="12" height="12" fill="none" stroke="#fff" stroke-width="2"/><rect x="4" y="4" width="6" height="6" fill="#fff"/></svg><svg style="position:absolute;left:1720.6px;top:593px" width="17" height="16" viewBox="0 0 17 16" ><path d="M3.4 14.2 A7.2 7.2 0 0 1 10.8 2.2" fill="none" stroke="#fff" stroke-width="1.5" stroke-linecap="round"/><path d="M15.5 5.2 A7.2 7.2 0 0 1 13.3 14.4" fill="none" stroke="#fff" stroke-width="1.5" stroke-linecap="round"/><path d="M14.8 2.2 L10.5 10.4 A2 2 0 1 1 7 8.4 Z" fill="#fff"/></svg><div class="t" style="left:1744px;top:594.72px;font-size:13.8px;color:#fff;">P-core 0 Clock</div><div class="t" style="left:1826px;width:150px;text-align:right;top:594.72px;font-size:13.8px;color:#fff;">4489,02 MHz</div><svg style="position:absolute;left:1983.2px;top:592.5px" width="16" height="16" viewBox="0 0 16 16" ><circle cx="8" cy="8" r="8" fill="#00bfff"/><rect x="7.4" y="8.2" width="1.2" height="4.4" rx=".6" fill="#8a316b"/><circle cx="8" cy="5.3" r=".75" fill="#8a316b"/></svg><svg style="position:absolute;left:1729px;top:586px;overflow:hidden" width="270" height="185" viewBox="0 0 270 185"><polygon points="0.0,184 0.0,58.0 270.0,58.0 270.0,184" fill="#552748"/><rect x="0" y="71.4" width="270" height="2" fill="#ffffff" opacity="0.2"/><rect x="0" y="127.2" width="270" height="2" fill="#ffffff" opacity="0.2"/><rect x="0" y="183.0" width="270" height="2" fill="#ffffff" opacity="0.2"/><polyline points="0.0,58.0 270.0,58.0" fill="none" stroke="#e44aab" stroke-width="2.2" stroke-linejoin="round"/></svg><div class="t" style="left:1665px;width:60px;text-align:right;top:652.42px;font-size:12.5px;color:#fff;letter-spacing:-0.3px;">4000</div><div class="t" style="left:1665px;width:60px;text-align:right;top:708.22px;font-size:12.5px;color:#fff;letter-spacing:-0.3px;">2000</div><div class="t" style="left:1665px;width:60px;text-align:right;top:764.02px;font-size:12.5px;color:#fff;letter-spacing:-0.3px;">0</div><div class="a" style="left:705px;top:796px;width:318px;height:200px;background:#1c1c1f"></div><div class="a" style="left:705px;top:796px;width:318px;height:30px;background:#8a316b"></div><svg style="position:absolute;left:710px;top:805.2px" width="20" height="12" viewBox="0 0 20 12" ><rect x="0" y="0.3" width="1.5" height="10.6" fill="#fff"/><rect x="2.2" y="0.3" width="17.8" height="8.2" fill="#fff"/><rect x="4" y="8" width="7.8" height="2.4" fill="#fff"/><circle cx="7" cy="4.4" r="2.55" fill="none" stroke="#8a316b" stroke-width="1.7"/><circle cx="15.3" cy="4.4" r="2.55" fill="none" stroke="#8a316b" stroke-width="1.7"/></svg><svg style="position:absolute;left:736.6px;top:803px" width="17" height="16" viewBox="0 0 17 16" ><path d="M3.4 14.2 A7.2 7.2 0 0 1 10.8 2.2" fill="none" stroke="#fff" stroke-width="1.5" stroke-linecap="round"/><path d="M15.5 5.2 A7.2 7.2 0 0 1 13.3 14.4" fill="none" stroke="#fff" stroke-width="1.5" stroke-linecap="round"/><path d="M14.8 2.2 L10.5 10.4 A2 2 0 1 1 7 8.4 Z" fill="#fff"/></svg><div class="t" style="left:760px;top:804.72px;font-size:13.8px;color:#fff;">GPU Clock</div><div class="t" style="left:842px;width:150px;text-align:right;top:804.72px;font-size:13.8px;color:#fff;">300,00 MHz</div><svg style="position:absolute;left:999.2px;top:802.5px" width="16" height="16" viewBox="0 0 16 16" ><circle cx="8" cy="8" r="8" fill="#00bfff"/><rect x="7.4" y="8.2" width="1.2" height="4.4" rx=".6" fill="#8a316b"/><circle cx="8" cy="5.3" r=".75" fill="#8a316b"/></svg><svg style="position:absolute;left:744px;top:796px;overflow:hidden" width="271" height="185" viewBox="0 0 271 185"><polygon points="0.0,184 0.0,160.2 206.5,160.2 214.2,59.0 216.4,146.6 222.3,59.0 228.6,147.7 233.4,59.0 238.6,145.1 243.1,153.2 249.7,160.2 270.2,160.2 270.2,184" fill="#552748"/><rect x="0" y="104.5" width="271" height="2" fill="#ffffff" opacity="0.2"/><rect x="0" y="183.0" width="271" height="2" fill="#ffffff" opacity="0.2"/><polyline points="0.0,160.2 206.5,160.2 214.2,59.0 216.4,146.6 222.3,59.0 228.6,147.7 233.4,59.0 238.6,145.1 243.1,153.2 249.7,160.2 270.2,160.2" fill="none" stroke="#e44aab" stroke-width="2.2" stroke-linejoin="round"/></svg><div class="t" style="left:680px;width:60px;text-align:right;top:895.52px;font-size:12.5px;color:#fff;letter-spacing:-0.3px;">1000</div><div class="t" style="left:680px;width:60px;text-align:right;top:974.02px;font-size:12.5px;color:#fff;letter-spacing:-0.3px;">0</div><div class="a" style="left:1033px;top:796px;width:318px;height:200px;background:#1c1c1f"></div><div class="a" style="left:1033px;top:796px;width:318px;height:30px;background:#8a316b"></div><svg style="position:absolute;left:1038px;top:805.2px" width="20" height="12" viewBox="0 0 20 12" ><rect x="0" y="0.3" width="1.5" height="10.6" fill="#fff"/><rect x="2.2" y="0.3" width="17.8" height="8.2" fill="#fff"/><rect x="4" y="8" width="7.8" height="2.4" fill="#fff"/><circle cx="7" cy="4.4" r="2.55" fill="none" stroke="#8a316b" stroke-width="1.7"/><circle cx="15.3" cy="4.4" r="2.55" fill="none" stroke="#8a316b" stroke-width="1.7"/></svg><svg style="position:absolute;left:1064.6px;top:803px" width="17" height="16" viewBox="0 0 17 16" ><path d="M3.4 14.2 A7.2 7.2 0 0 1 10.8 2.2" fill="none" stroke="#fff" stroke-width="1.5" stroke-linecap="round"/><path d="M15.5 5.2 A7.2 7.2 0 0 1 13.3 14.4" fill="none" stroke="#fff" stroke-width="1.5" stroke-linecap="round"/><path d="M14.8 2.2 L10.5 10.4 A2 2 0 1 1 7 8.4 Z" fill="#fff"/></svg><div class="t" style="left:1088px;top:804.72px;font-size:13.8px;color:#fff;">GPU Memory Clock</div><div class="t" style="left:1170px;width:150px;text-align:right;top:804.72px;font-size:13.8px;color:#fff;">101,25 MHz</div><svg style="position:absolute;left:1327.2px;top:802.5px" width="16" height="16" viewBox="0 0 16 16" ><circle cx="8" cy="8" r="8" fill="#00bfff"/><rect x="7.4" y="8.2" width="1.2" height="4.4" rx=".6" fill="#8a316b"/><circle cx="8" cy="5.3" r=".75" fill="#8a316b"/></svg><svg style="position:absolute;left:1072px;top:796px;overflow:hidden" width="271" height="185" viewBox="0 0 271 185"><polygon points="0.0,184 0.0,176.2 206.5,176.2 214.2,59.0 216.4,168.8 222.3,59.0 228.6,175.4 233.4,59.0 238.6,169.3 243.6,176.2 270.2,176.2 270.2,184" fill="#552748"/><rect x="0" y="111.4" width="271" height="2" fill="#ffffff" opacity="0.2"/><rect x="0" y="183.0" width="271" height="2" fill="#ffffff" opacity="0.2"/><polyline points="0.0,176.2 206.5,176.2 214.2,59.0 216.4,168.8 222.3,59.0 228.6,175.4 233.4,59.0 238.6,169.3 243.6,176.2 270.2,176.2" fill="none" stroke="#e44aab" stroke-width="2.2" stroke-linejoin="round"/></svg><div class="t" style="left:1008px;width:60px;text-align:right;top:902.42px;font-size:12.5px;color:#fff;letter-spacing:-0.3px;">1000</div><div class="t" style="left:1008px;width:60px;text-align:right;top:974.02px;font-size:12.5px;color:#fff;letter-spacing:-0.3px;">0</div><div class="a" style="left:1361px;top:796px;width:318px;height:200px;background:#1c1c1f"></div><div class="a" style="left:1361px;top:796px;width:318px;height:30px;background:#8a244e"></div><svg style="position:absolute;left:1367.5px;top:802.3px" width="17" height="17" viewBox="0 0 17 17" ><circle cx="8.5" cy="8.5" r="7.6" fill="none" stroke="#fff" stroke-width="1.5"/><path d="M5.9 6.6 A2.6 2.6 0 1 1 9.8 8.7 Q8.5 9.4 8.5 10.8" fill="none" stroke="#fff" stroke-width="1.5"/><rect x="7.7" y="12" width="1.6" height="1.6" fill="#fff"/></svg><svg style="position:absolute;left:1392.8px;top:802.8px" width="17" height="17" viewBox="0 0 16.4 16.4" ><circle cx="8.2" cy="8.2" r="7.3" fill="none" stroke="#fff" stroke-width="1.5"/><path d="M2.8 12.6 Q8.2 9.4 13.6 12.6 Q12 15.5 8.2 15.5 Q4.4 15.5 2.8 12.6Z" fill="#fff"/><circle cx="8.2" cy="8.6" r="1.5" fill="#fff"/><path d="M8.2 8.6 L13 6" stroke="#fff" stroke-width="1.3" stroke-linecap="round"/><circle cx="5" cy="6.6" r=".8" fill="#fff"/><circle cx="7" cy="4.2" r=".8" fill="#fff"/><circle cx="10.2" cy="4.2" r=".8" fill="#fff"/></svg><div class="t" style="left:1416px;top:804.72px;font-size:13.8px;color:#fff;">Physical Memory Load</div><div class="t" style="left:1498px;width:150px;text-align:right;top:804.72px;font-size:13.8px;color:#fff;">20,30 %</div><svg style="position:absolute;left:1655.2px;top:802.5px" width="16" height="16" viewBox="0 0 16 16" ><circle cx="8" cy="8" r="8" fill="#00bfff"/><rect x="7.4" y="8.2" width="1.2" height="4.4" rx=".6" fill="#8a244e"/><circle cx="8" cy="5.3" r=".75" fill="#8a244e"/></svg><svg style="position:absolute;left:1393px;top:796px;overflow:hidden" width="278" height="185" viewBox="0 0 278 185"><polygon points="0.0,184 0.0,157.0 212.0,157.0 219.0,155.8 278.0,155.8 278.0,184" fill="#55203a"/><rect x="0" y="45.0" width="278" height="2" fill="#ffffff" opacity="0.2"/><rect x="0" y="114.0" width="278" height="2" fill="#ffffff" opacity="0.2"/><rect x="0" y="183.0" width="278" height="2" fill="#ffffff" opacity="0.2"/><polyline points="0.0,157.0 212.0,157.0 219.0,155.8 278.0,155.8" fill="none" stroke="#e8357b" stroke-width="2.2" stroke-linejoin="round"/></svg><div class="t" style="left:1329px;width:60px;text-align:right;top:836.02px;font-size:12.5px;color:#fff;letter-spacing:-0.3px;">100</div><div class="t" style="left:1329px;width:60px;text-align:right;top:905.02px;font-size:12.5px;color:#fff;letter-spacing:-0.3px;">50</div><div class="t" style="left:1329px;width:60px;text-align:right;top:974.02px;font-size:12.5px;color:#fff;letter-spacing:-0.3px;">0</div><div class="a" style="left:1689px;top:796px;width:318px;height:200px;background:#1c1c1f"></div><div class="a" style="left:1689px;top:796px;width:318px;height:30px;background:#8a244e"></div><svg style="position:absolute;left:1697px;top:804px" width="14" height="14" viewBox="0 0 14 14" ><rect x="1" y="1" width="12" height="12" fill="none" stroke="#fff" stroke-width="2"/><rect x="4" y="4" width="6" height="6" fill="#fff"/></svg><svg style="position:absolute;left:1720.8px;top:802.8px" width="17" height="17" viewBox="0 0 16.4 16.4" ><circle cx="8.2" cy="8.2" r="7.3" fill="none" stroke="#fff" stroke-width="1.5"/><path d="M2.8 12.6 Q8.2 9.4 13.6 12.6 Q12 15.5 8.2 15.5 Q4.4 15.5 2.8 12.6Z" fill="#fff"/><circle cx="8.2" cy="8.6" r="1.5" fill="#fff"/><path d="M8.2 8.6 L13 6" stroke="#fff" stroke-width="1.3" stroke-linecap="round"/><circle cx="5" cy="6.6" r=".8" fill="#fff"/><circle cx="7" cy="4.2" r=".8" fill="#fff"/><circle cx="10.2" cy="4.2" r=".8" fill="#fff"/></svg><div class="t" style="left:1744px;top:804.72px;font-size:13.8px;color:#fff;">Total CPU Usage</div><div class="t" style="left:1826px;width:150px;text-align:right;top:804.72px;font-size:13.8px;color:#fff;">100,00 %</div><svg style="position:absolute;left:1983.2px;top:802.5px" width="16" height="16" viewBox="0 0 16 16" ><circle cx="8" cy="8" r="8" fill="#00bfff"/><rect x="7.4" y="8.2" width="1.2" height="4.4" rx=".6" fill="#8a244e"/><circle cx="8" cy="5.3" r=".75" fill="#8a244e"/></svg><svg style="position:absolute;left:1721px;top:796px;overflow:hidden" width="278" height="185" viewBox="0 0 278 185"><polygon points="0.0,184 0.0,46.5 278.0,46.5 278.0,184" fill="#55203a"/><rect x="0" y="45.0" width="278" height="2" fill="#ffffff" opacity="0.2"/><rect x="0" y="114.0" width="278" height="2" fill="#ffffff" opacity="0.2"/><rect x="0" y="183.0" width="278" height="2" fill="#ffffff" opacity="0.2"/><polyline points="0.0,46.5 278.0,46.5" fill="none" stroke="#e8357b" stroke-width="2.2" stroke-linejoin="round"/></svg><div class="t" style="left:1657px;width:60px;text-align:right;top:836.02px;font-size:12.5px;color:#fff;letter-spacing:-0.3px;">100</div><div class="t" style="left:1657px;width:60px;text-align:right;top:905.02px;font-size:12.5px;color:#fff;letter-spacing:-0.3px;">50</div><div class="t" style="left:1657px;width:60px;text-align:right;top:974.02px;font-size:12.5px;color:#fff;letter-spacing:-0.3px;">0</div><div class="a" style="left:705px;top:1006px;width:318px;height:200px;background:#1c1c1f"></div><div class="a" style="left:705px;top:1006px;width:318px;height:30px;background:#8a244e"></div><svg style="position:absolute;left:710px;top:1015.2px" width="20" height="12" viewBox="0 0 20 12" ><rect x="0" y="0.3" width="1.5" height="10.6" fill="#fff"/><rect x="2.2" y="0.3" width="17.8" height="8.2" fill="#fff"/><rect x="4" y="8" width="7.8" height="2.4" fill="#fff"/><circle cx="7" cy="4.4" r="2.55" fill="none" stroke="#8a244e" stroke-width="1.7"/><circle cx="15.3" cy="4.4" r="2.55" fill="none" stroke="#8a244e" stroke-width="1.7"/></svg><svg style="position:absolute;left:736.8px;top:1012.8px" width="17" height="17" viewBox="0 0 16.4 16.4" ><circle cx="8.2" cy="8.2" r="7.3" fill="none" stroke="#fff" stroke-width="1.5"/><path d="M2.8 12.6 Q8.2 9.4 13.6 12.6 Q12 15.5 8.2 15.5 Q4.4 15.5 2.8 12.6Z" fill="#fff"/><circle cx="8.2" cy="8.6" r="1.5" fill="#fff"/><path d="M8.2 8.6 L13 6" stroke="#fff" stroke-width="1.3" stroke-linecap="round"/><circle cx="5" cy="6.6" r=".8" fill="#fff"/><circle cx="7" cy="4.2" r=".8" fill="#fff"/><circle cx="10.2" cy="4.2" r=".8" fill="#fff"/></svg><div class="t" style="left:760px;top:1014.72px;font-size:13.8px;color:#fff;">GPU Core Load</div><div class="t" style="left:842px;width:150px;text-align:right;top:1014.72px;font-size:13.8px;color:#fff;">4,00 %</div><svg style="position:absolute;left:999.2px;top:1012.5px" width="16" height="16" viewBox="0 0 16 16" ><circle cx="8" cy="8" r="8" fill="#00bfff"/><rect x="7.4" y="8.2" width="1.2" height="4.4" rx=".6" fill="#8a244e"/><circle cx="8" cy="5.3" r=".75" fill="#8a244e"/></svg><svg style="position:absolute;left:737px;top:1006px;overflow:hidden" width="278" height="185" viewBox="0 0 278 185"><polygon points="0.4,184 0.4,178.7 7.7,175.4 11.4,171.4 16.5,178.3 22.3,179.5 28.1,176.8 36.2,174.4 38.4,168.8 44.9,174.7 55.2,174.7 63.9,179.0 66.8,161.8 72.7,171.0 78.5,174.9 83.6,172.5 92.4,179.0 94.6,163.7 101.9,172.0 107.0,174.4 112.1,171.0 116.5,172.0 122.3,171.0 128.1,175.4 134.7,174.7 139.8,170.6 144.9,174.4 150.0,174.9 155.9,177.3 162.5,174.7 167.6,168.5 172.7,172.0 178.5,179.0 183.6,178.0 190.2,174.4 195.3,168.5 201.1,174.4 206.2,177.9 211.4,179.0 220.1,174.7 222.3,182.2 228.1,157.4 234.7,155.4 239.1,164.4 244.2,177.9 250.8,182.2 255.9,179.0 262.5,170.6 272.7,178.5 277.8,178.5 277.8,184" fill="#55203a"/><rect x="0" y="45.0" width="278" height="2" fill="#ffffff" opacity="0.2"/><rect x="0" y="114.0" width="278" height="2" fill="#ffffff" opacity="0.2"/><rect x="0" y="183.0" width="278" height="2" fill="#ffffff" opacity="0.2"/><polyline points="0.4,178.7 7.7,175.4 11.4,171.4 16.5,178.3 22.3,179.5 28.1,176.8 36.2,174.4 38.4,168.8 44.9,174.7 55.2,174.7 63.9,179.0 66.8,161.8 72.7,171.0 78.5,174.9 83.6,172.5 92.4,179.0 94.6,163.7 101.9,172.0 107.0,174.4 112.1,171.0 116.5,172.0 122.3,171.0 128.1,175.4 134.7,174.7 139.8,170.6 144.9,174.4 150.0,174.9 155.9,177.3 162.5,174.7 167.6,168.5 172.7,172.0 178.5,179.0 183.6,178.0 190.2,174.4 195.3,168.5 201.1,174.4 206.2,177.9 211.4,179.0 220.1,174.7 222.3,182.2 228.1,157.4 234.7,155.4 239.1,164.4 244.2,177.9 250.8,182.2 255.9,179.0 262.5,170.6 272.7,178.5 277.8,178.5" fill="none" stroke="#e8357b" stroke-width="2.2" stroke-linejoin="round"/></svg><div class="t" style="left:673px;width:60px;text-align:right;top:1046.02px;font-size:12.5px;color:#fff;letter-spacing:-0.3px;">100</div><div class="t" style="left:673px;width:60px;text-align:right;top:1115.02px;font-size:12.5px;color:#fff;letter-spacing:-0.3px;">50</div><div class="t" style="left:673px;width:60px;text-align:right;top:1184.02px;font-size:12.5px;color:#fff;letter-spacing:-0.3px;">0</div><div class="a" style="left:1033px;top:1006px;width:318px;height:200px;background:#1c1c1f"></div><div class="a" style="left:1033px;top:1006px;width:318px;height:30px;background:#8a244e"></div><svg style="position:absolute;left:1038px;top:1015.2px" width="20" height="12" viewBox="0 0 20 12" ><rect x="0" y="0.3" width="1.5" height="10.6" fill="#fff"/><rect x="2.2" y="0.3" width="17.8" height="8.2" fill="#fff"/><rect x="4" y="8" width="7.8" height="2.4" fill="#fff"/><circle cx="7" cy="4.4" r="2.55" fill="none" stroke="#8a244e" stroke-width="1.7"/><circle cx="15.3" cy="4.4" r="2.55" fill="none" stroke="#8a244e" stroke-width="1.7"/></svg><svg style="position:absolute;left:1064.8px;top:1012.8px" width="17" height="17" viewBox="0 0 16.4 16.4" ><circle cx="8.2" cy="8.2" r="7.3" fill="none" stroke="#fff" stroke-width="1.5"/><path d="M2.8 12.6 Q8.2 9.4 13.6 12.6 Q12 15.5 8.2 15.5 Q4.4 15.5 2.8 12.6Z" fill="#fff"/><circle cx="8.2" cy="8.6" r="1.5" fill="#fff"/><path d="M8.2 8.6 L13 6" stroke="#fff" stroke-width="1.3" stroke-linecap="round"/><circle cx="5" cy="6.6" r=".8" fill="#fff"/><circle cx="7" cy="4.2" r=".8" fill="#fff"/><circle cx="10.2" cy="4.2" r=".8" fill="#fff"/></svg><div class="t" style="left:1088px;top:1014.72px;font-size:13.8px;color:#fff;">GPU Memory Usage</div><div class="t" style="left:1170px;width:150px;text-align:right;top:1014.72px;font-size:13.8px;color:#fff;">10,66 %</div><svg style="position:absolute;left:1327.2px;top:1012.5px" width="16" height="16" viewBox="0 0 16 16" ><circle cx="8" cy="8" r="8" fill="#00bfff"/><rect x="7.4" y="8.2" width="1.2" height="4.4" rx=".6" fill="#8a244e"/><circle cx="8" cy="5.3" r=".75" fill="#8a244e"/></svg><svg style="position:absolute;left:1065px;top:1006px;overflow:hidden" width="278" height="185" viewBox="0 0 278 185"><polygon points="0.0,184 0.0,169.0 25.0,169.0 45.0,170.5 135.0,170.0 235.0,170.5 278.0,169.5 278.0,184" fill="#55203a"/><rect x="0" y="45.0" width="278" height="2" fill="#ffffff" opacity="0.2"/><rect x="0" y="114.0" width="278" height="2" fill="#ffffff" opacity="0.2"/><rect x="0" y="183.0" width="278" height="2" fill="#ffffff" opacity="0.2"/><polyline points="0.0,169.0 25.0,169.0 45.0,170.5 135.0,170.0 235.0,170.5 278.0,169.5" fill="none" stroke="#e8357b" stroke-width="2.2" stroke-linejoin="round"/></svg><div class="t" style="left:1001px;width:60px;text-align:right;top:1046.02px;font-size:12.5px;color:#fff;letter-spacing:-0.3px;">100</div><div class="t" style="left:1001px;width:60px;text-align:right;top:1115.02px;font-size:12.5px;color:#fff;letter-spacing:-0.3px;">50</div><div class="t" style="left:1001px;width:60px;text-align:right;top:1184.02px;font-size:12.5px;color:#fff;letter-spacing:-0.3px;">0</div><div class="a" style="left:31px;top:492px;width:634px;height:791px;background:#f1f1f1;border-radius:7px;overflow:hidden;box-shadow:0 6px 16px rgba(0,0,0,.45), 0 0 0 1px rgba(255,255,255,.35)"></div><div class="a" style="left:31px;top:522px;width:634px;height:20px;background:#fff"></div><div class="a" style="left:32px;top:542px;width:632px;height:2px;background:#8e8e8e"></div><div class="a" style="left:33px;top:544px;width:630px;height:17px;background:#f0f0f0"></div><div class="a" style="left:33px;top:561px;width:630px;height:1px;background:#a9a9a9"></div><div class="a" style="left:271px;top:545px;width:1px;height:16px;background:#b8b8b8"></div><div class="a" style="left:272px;top:545px;width:1px;height:16px;background:#fff"></div><div class="a" style="left:358px;top:545px;width:1px;height:16px;background:#b8b8b8"></div><div class="a" style="left:359px;top:545px;width:1px;height:16px;background:#fff"></div><div class="a" style="left:445px;top:545px;width:1px;height:16px;background:#b8b8b8"></div><div class="a" style="left:446px;top:545px;width:1px;height:16px;background:#fff"></div><div class="a" style="left:532px;top:545px;width:1px;height:16px;background:#b8b8b8"></div><div class="a" style="left:533px;top:545px;width:1px;height:16px;background:#fff"></div><div class="a" style="left:33px;top:562px;width:614px;height:700px;background:#fff"></div><div class="a" style="left:31px;top:544px;width:2px;height:719px;background:#a8a8a8"></div><div class="a" style="left:647px;top:562px;width:16px;height:700px;background:#f0f0f0"></div><div class="a" style="left:654px;top:580px;width:2px;height:140px;background:#8a8a8a"></div><div class="a" style="left:33px;top:1262px;width:630px;height:1px;background:#fff"></div><div class="a" style="left:33px;top:1263px;width:630px;height:19px;background:#f0f0f0"></div><div class="t" style="left:33.5px;top:1268.54px;font-size:12px;color:#000;">Ready</div><div class="a" style="left:546px;top:1266px;width:27px;height:16px;border-left:1px solid #a8a8a8;border-top:1px solid #a8a8a8;border-right:1px solid #fff"></div><div class="a" style="left:577px;top:1266px;width:32px;height:16px;border-left:1px solid #a8a8a8;border-top:1px solid #a8a8a8;border-right:1px solid #fff"></div><div class="a" style="left:613px;top:1266px;width:31px;height:16px;border-left:1px solid #a8a8a8;border-top:1px solid #a8a8a8;border-right:1px solid #fff"></div><svg style="position:absolute;left:650px;top:1268px" width="14" height="14" viewBox="0 0 14 14" ><path d="M13.5 1 L3 11.5 M13.5 5 L7 11.5" stroke="#8a8a8a" stroke-width="1.1"/></svg><svg style="position:absolute;left:39px;top:498px" width="16" height="16" viewBox="0 0 16 16" ><defs><linearGradient id="hwg" x1="0" y1="0" x2="0" y2="1"><stop offset="0" stop-color="#d01a1a"/><stop offset="1" stop-color="#8c0a0a"/></linearGradient></defs><rect width="16" height="16" fill="url(#hwg)"/><path d="M9.3 2.5 L5 9 H8 L6.6 14 L11 7 H8.2 Z" fill="#fff"/></svg><div class="t" style="left:60.4px;top:499.92px;font-size:12.5px;color:#9b9b9b;">HWMonitor</div><div class="a" style="left:546px;top:506px;width:10px;height:1px;background:#7a7a7a"></div><div class="a" style="left:591px;top:501px;width:8px;height:8px;border:1px solid #7a7a7a;border-radius:1.5px"></div><svg style="position:absolute;left:637px;top:501px" width="10" height="10" viewBox="0 0 10 10" ><path d="M0 0 L10 10 M10 0 L0 10" stroke="#7a7a7a" stroke-width="1"/></svg><div class="t" style="left:38.3px;top:525.84px;font-size:12px;color:#5e5e5e;">File</div><div class="t" style="left:70.2px;top:525.84px;font-size:12px;color:#5e5e5e;">View</div><div class="t" style="left:108.9px;top:525.84px;font-size:12px;color:#5e5e5e;">Tools</div><div class="t" style="left:151.4px;top:525.84px;font-size:12px;color:#5e5e5e;">Help</div><div class="t" style="left:39.1px;top:547.54px;font-size:12px;color:#000;">Sensor</div><div class="t" style="left:279.3px;top:547.54px;font-size:12px;color:#000;">Value</div><div class="t" style="left:366.3px;top:547.54px;font-size:12px;color:#000;">Min</div><div class="t" style="left:453px;top:547.54px;font-size:12px;color:#000;">Max</div><div class="a" style="left:90px;top:582px;width:556px;height:16px;background:#d1e5f5"></div><div class="a" style="left:90px;top:870px;width:556px;height:16px;background:#d1e5f5"></div><div class="a" style="left:90px;top:1176px;width:556px;height:16px;background:#d1e5f5"></div><div class="a" style="left:128px;top:635px;width:518px;height:18px;background:#ededed"></div><div class="a" style="left:128px;top:671px;width:518px;height:18px;background:#ededed"></div><div class="a" style="left:128px;top:707px;width:518px;height:18px;background:#ededed"></div><div class="a" style="left:128px;top:761px;width:518px;height:18px;background:#ededed"></div><div class="a" style="left:128px;top:797px;width:518px;height:18px;background:#ededed"></div><div class="a" style="left:128px;top:833px;width:518px;height:18px;background:#ededed"></div><div class="a" style="left:128px;top:923px;width:518px;height:18px;background:#ededed"></div><div class="a" style="left:128px;top:959px;width:518px;height:18px;background:#ededed"></div><div class="a" style="left:128px;top:1013px;width:518px;height:18px;background:#ededed"></div><div class="a" style="left:128px;top:1049px;width:518px;height:18px;background:#ededed"></div><div class="a" style="left:128px;top:1085px;width:518px;height:18px;background:#ededed"></div><div class="a" style="left:128px;top:1211px;width:518px;height:18px;background:#ededed"></div><div class="a" style="left:128px;top:1247px;width:518px;height:15px;background:#ededed"></div><div class="a" style="left:60px;top:579px;width:1px;height:683px;background:repeating-linear-gradient(to bottom,#7c7c7c 0 1px,transparent 1px 2px)"></div><div class="a" style="left:79px;top:597px;width:1px;height:229px;background:repeating-linear-gradient(to bottom,#7c7c7c 0 1px,transparent 1px 2px)"></div><div class="a" style="left:98px;top:633px;width:1px;height:103px;background:repeating-linear-gradient(to bottom,#7c7c7c 0 1px,transparent 1px 2px)"></div><div class="a" style="left:98px;top:759px;width:1px;height:49px;background:repeating-linear-gradient(to bottom,#7c7c7c 0 1px,transparent 1px 2px)"></div><div class="a" style="left:98px;top:831px;width:1px;height:31px;background:repeating-linear-gradient(to bottom,#7c7c7c 0 1px,transparent 1px 2px)"></div><div class="a" style="left:79px;top:885px;width:1px;height:283px;background:repeating-linear-gradient(to bottom,#7c7c7c 0 1px,transparent 1px 2px)"></div><div class="a" style="left:98px;top:921px;width:1px;height:67px;background:repeating-linear-gradient(to bottom,#7c7c7c 0 1px,transparent 1px 2px)"></div><div class="a" style="left:98px;top:1011px;width:1px;height:103px;background:repeating-linear-gradient(to bottom,#7c7c7c 0 1px,transparent 1px 2px)"></div><div class="a" style="left:79px;top:1191px;width:1px;height:71px;background:repeating-linear-gradient(to bottom,#7c7c7c 0 1px,transparent 1px 2px)"></div><div class="a" style="left:98px;top:1209px;width:1px;height:53px;background:repeating-linear-gradient(to bottom,#7c7c7c 0 1px,transparent 1px 2px)"></div><div class="a" style="left:60px;top:591px;width:12px;height:1px;background:repeating-linear-gradient(to right,#7c7c7c 0 1px,transparent 1px 2px)"></div><div class="a" style="left:79px;top:609px;width:12px;height:1px;background:repeating-linear-gradient(to right,#7c7c7c 0 1px,transparent 1px 2px)"></div><div class="a" style="left:79px;top:627px;width:12px;height:1px;background:repeating-linear-gradient(to right,#7c7c7c 0 1px,transparent 1px 2px)"></div><div class="a" style="left:98px;top:645px;width:12px;height:1px;background:repeating-linear-gradient(to right,#7c7c7c 0 1px,transparent 1px 2px)"></div><div class="a" style="left:98px;top:663px;width:12px;height:1px;background:repeating-linear-gradient(to right,#7c7c7c 0 1px,transparent 1px 2px)"></div><div class="a" style="left:98px;top:681px;width:12px;height:1px;background:repeating-linear-gradient(to right,#7c7c7c 0 1px,transparent 1px 2px)"></div><div class="a" style="left:98px;top:699px;width:12px;height:1px;background:repeating-linear-gradient(to right,#7c7c7c 0 1px,transparent 1px 2px)"></div><div class="a" style="left:98px;top:717px;width:12px;height:1px;background:repeating-linear-gradient(to right,#7c7c7c 0 1px,transparent 1px 2px)"></div><div class="a" style="left:98px;top:735px;width:12px;height:1px;background:repeating-linear-gradient(to right,#7c7c7c 0 1px,transparent 1px 2px)"></div><div class="a" style="left:79px;top:753px;width:12px;height:1px;background:repeating-linear-gradient(to right,#7c7c7c 0 1px,transparent 1px 2px)"></div><div class="a" style="left:98px;top:771px;width:12px;height:1px;background:repeating-linear-gradient(to right,#7c7c7c 0 1px,transparent 1px 2px)"></div><div class="a" style="left:98px;top:789px;width:12px;height:1px;background:repeating-linear-gradient(to right,#7c7c7c 0 1px,transparent 1px 2px)"></div><div class="a" style="left:98px;top:807px;width:12px;height:1px;background:repeating-linear-gradient(to right,#7c7c7c 0 1px,transparent 1px 2px)"></div><div class="a" style="left:79px;top:825px;width:12px;height:1px;background:repeating-linear-gradient(to right,#7c7c7c 0 1px,transparent 1px 2px)"></div><div class="a" style="left:98px;top:843px;width:12px;height:1px;background:repeating-linear-gradient(to right,#7c7c7c 0 1px,transparent 1px 2px)"></div><div class="a" style="left:98px;top:861px;width:12px;height:1px;background:repeating-linear-gradient(to right,#7c7c7c 0 1px,transparent 1px 2px)"></div><div class="a" style="left:60px;top:879px;width:12px;height:1px;background:repeating-linear-gradient(to right,#7c7c7c 0 1px,transparent 1px 2px)"></div><div class="a" style="left:79px;top:897px;width:12px;height:1px;background:repeating-linear-gradient(to right,#7c7c7c 0 1px,transparent 1px 2px)"></div><div class="a" style="left:79px;top:915px;width:12px;height:1px;background:repeating-linear-gradient(to right,#7c7c7c 0 1px,transparent 1px 2px)"></div><div class="a" style="left:98px;top:933px;width:12px;height:1px;background:repeating-linear-gradient(to right,#7c7c7c 0 1px,transparent 1px 2px)"></div><div class="a" style="left:98px;top:951px;width:12px;height:1px;background:repeating-linear-gradient(to right,#7c7c7c 0 1px,transparent 1px 2px)"></div><div class="a" style="left:98px;top:969px;width:12px;height:1px;background:repeating-linear-gradient(to right,#7c7c7c 0 1px,transparent 1px 2px)"></div><div class="a" style="left:98px;top:987px;width:12px;height:1px;background:repeating-linear-gradient(to right,#7c7c7c 0 1px,transparent 1px 2px)"></div><div class="a" style="left:79px;top:1005px;width:12px;height:1px;background:repeating-linear-gradient(to right,#7c7c7c 0 1px,transparent 1px 2px)"></div><div class="a" style="left:98px;top:1023px;width:12px;height:1px;background:repeating-linear-gradient(to right,#7c7c7c 0 1px,transparent 1px 2px)"></div><div class="a" style="left:98px;top:1041px;width:12px;height:1px;background:repeating-linear-gradient(to right,#7c7c7c 0 1px,transparent 1px 2px)"></div><div class="a" style="left:98px;top:1059px;width:12px;height:1px;background:repeating-linear-gradient(to right,#7c7c7c 0 1px,transparent 1px 2px)"></div><div class="a" style="left:98px;top:1077px;width:12px;height:1px;background:repeating-linear-gradient(to right,#7c7c7c 0 1px,transparent 1px 2px)"></div><div class="a" style="left:98px;top:1095px;width:12px;height:1px;background:repeating-linear-gradient(to right,#7c7c7c 0 1px,transparent 1px 2px)"></div><div class="a" style="left:98px;top:1113px;width:12px;height:1px;background:repeating-linear-gradient(to right,#7c7c7c 0 1px,transparent 1px 2px)"></div><div class="a" style="left:79px;top:1131px;width:12px;height:1px;background:repeating-linear-gradient(to right,#7c7c7c 0 1px,transparent 1px 2px)"></div><div class="a" style="left:79px;top:1149px;width:12px;height:1px;background:repeating-linear-gradient(to right,#7c7c7c 0 1px,transparent 1px 2px)"></div><div class="a" style="left:79px;top:1167px;width:12px;height:1px;background:repeating-linear-gradient(to right,#7c7c7c 0 1px,transparent 1px 2px)"></div><div class="a" style="left:60px;top:1185px;width:12px;height:1px;background:repeating-linear-gradient(to right,#7c7c7c 0 1px,transparent 1px 2px)"></div><div class="a" style="left:79px;top:1203px;width:12px;height:1px;background:repeating-linear-gradient(to right,#7c7c7c 0 1px,transparent 1px 2px)"></div><div class="a" style="left:98px;top:1221px;width:12px;height:1px;background:repeating-linear-gradient(to right,#7c7c7c 0 1px,transparent 1px 2px)"></div><div class="a" style="left:98px;top:1239px;width:12px;height:1px;background:repeating-linear-gradient(to right,#7c7c7c 0 1px,transparent 1px 2px)"></div><div class="a" style="left:98px;top:1257px;width:12px;height:1px;background:repeating-linear-gradient(to right,#7c7c7c 0 1px,transparent 1px 2px)"></div><div class="a" style="left:37px;top:569px;width:7px;height:7px;border:1px solid #7a7a7a;background:#fff"></div><div class="a" style="left:39px;top:573px;width:5px;height:1px;background:#000"></div><div class="a" style="left:56px;top:587px;width:7px;height:7px;border:1px solid #7a7a7a;background:#fff"></div><div class="a" style="left:58px;top:591px;width:5px;height:1px;background:#000"></div><div class="a" style="left:75px;top:605px;width:7px;height:7px;border:1px solid #7a7a7a;background:#fff"></div><div class="a" style="left:77px;top:609px;width:5px;height:1px;background:#000"></div><div class="a" style="left:79px;top:607px;width:1px;height:5px;background:#000"></div><div class="a" style="left:75px;top:623px;width:7px;height:7px;border:1px solid #7a7a7a;background:#fff"></div><div class="a" style="left:77px;top:627px;width:5px;height:1px;background:#000"></div><div class="a" style="left:75px;top:749px;width:7px;height:7px;border:1px solid #7a7a7a;background:#fff"></div><div class="a" style="left:77px;top:753px;width:5px;height:1px;background:#000"></div><div class="a" style="left:75px;top:821px;width:7px;height:7px;border:1px solid #7a7a7a;background:#fff"></div><div class="a" style="left:77px;top:825px;width:5px;height:1px;background:#000"></div><div class="a" style="left:56px;top:875px;width:7px;height:7px;border:1px solid #7a7a7a;background:#fff"></div><div class="a" style="left:58px;top:879px;width:5px;height:1px;background:#000"></div><div class="a" style="left:75px;top:893px;width:7px;height:7px;border:1px solid #7a7a7a;background:#fff"></div><div class="a" style="left:77px;top:897px;width:5px;height:1px;background:#000"></div><div class="a" style="left:79px;top:895px;width:1px;height:5px;background:#000"></div><div class="a" style="left:75px;top:911px;width:7px;height:7px;border:1px solid #7a7a7a;background:#fff"></div><div class="a" style="left:77px;top:915px;width:5px;height:1px;background:#000"></div><div class="a" style="left:94px;top:965px;width:7px;height:7px;border:1px solid #7a7a7a;background:#fff"></div><div class="a" style="left:96px;top:969px;width:5px;height:1px;background:#000"></div><div class="a" style="left:98px;top:967px;width:1px;height:5px;background:#000"></div><div class="a" style="left:94px;top:983px;width:7px;height:7px;border:1px solid #7a7a7a;background:#fff"></div><div class="a" style="left:96px;top:987px;width:5px;height:1px;background:#000"></div><div class="a" style="left:98px;top:985px;width:1px;height:5px;background:#000"></div><div class="a" style="left:75px;top:1001px;width:7px;height:7px;border:1px solid #7a7a7a;background:#fff"></div><div class="a" style="left:77px;top:1005px;width:5px;height:1px;background:#000"></div><div class="a" style="left:75px;top:1127px;width:7px;height:7px;border:1px solid #7a7a7a;background:#fff"></div><div class="a" style="left:77px;top:1131px;width:5px;height:1px;background:#000"></div><div class="a" style="left:79px;top:1129px;width:1px;height:5px;background:#000"></div><div class="a" style="left:75px;top:1145px;width:7px;height:7px;border:1px solid #7a7a7a;background:#fff"></div><div class="a" style="left:77px;top:1149px;width:5px;height:1px;background:#000"></div><div class="a" style="left:79px;top:1147px;width:1px;height:5px;background:#000"></div><div class="a" style="left:75px;top:1163px;width:7px;height:7px;border:1px solid #7a7a7a;background:#fff"></div><div class="a" style="left:77px;top:1167px;width:5px;height:1px;background:#000"></div><div class="a" style="left:79px;top:1165px;width:1px;height:5px;background:#000"></div><div class="a" style="left:56px;top:1181px;width:7px;height:7px;border:1px solid #7a7a7a;background:#fff"></div><div class="a" style="left:58px;top:1185px;width:5px;height:1px;background:#000"></div><div class="a" style="left:75px;top:1199px;width:7px;height:7px;border:1px solid #7a7a7a;background:#fff"></div><div class="a" style="left:77px;top:1203px;width:5px;height:1px;background:#000"></div><div class="t" style="left:73px;top:566.44px;font-size:12px;color:#000;">DOM</div><svg style="position:absolute;left:52px;top:564px" width="16" height="16" viewBox="0 0 16 16" ><rect x="0.5" y="0.5" width="15" height="11" fill="#3aaef0" stroke="#2a7ab0" stroke-width="1"/><path d="M1.5 1.5 L14.5 1.5 L1.5 10.5 Z" fill="#7fd0ff" opacity=".6"/><rect x="6" y="12" width="4" height="1.5" fill="#8ab0c8"/><rect x="2" y="14" width="12" height="1.2" fill="#8ab0c8"/></svg><div class="t" style="left:92px;top:584.44px;font-size:12px;color:#000;">Micro-Star International Co. Lt...</div><svg style="position:absolute;left:72px;top:582px" width="16" height="16" viewBox="0 0 16 16" ><rect x="0" y="0" width="16" height="16" fill="#1e3a78"/><rect x="1.5" y="1" width="1.6" height="9" fill="#e8e0c8"/><rect x="4" y="1" width="1.6" height="9" fill="#e8e0c8"/><rect x="8" y="3" width="6" height="6" fill="#d8c898"/><rect x="9.5" y="4.5" width="3" height="3" fill="#1e3a78"/><rect x="5" y="11" width="10" height="1.6" fill="#e0d050"/><rect x="5" y="13.5" width="10" height="1.6" fill="#e0d050"/></svg><div class="t" style="left:111px;top:602.44px;font-size:12px;color:#000;">Voltages</div><svg style="position:absolute;left:90px;top:600px" width="16" height="16" viewBox="0 0 16 16" ><path d="M0.6 11.6 L6.6 3.6 L8.3 7.3 L15.6 3.2 L9.3 10.9 L7.6 7.8 Z" fill="#f2c21a" stroke="#b07a00" stroke-width="0.7" stroke-linejoin="round"/></svg><div class="t" style="left:111px;top:620.44px;font-size:12px;color:#000;">Temperatures</div><svg style="position:absolute;left:90px;top:618px" width="16" height="16" viewBox="0 0 16 16" ><path d="M13.5 1.5 L5.5 10" stroke="#c8c8c8" stroke-width="2.5" stroke-linecap="round"/><path d="M9.5 6 L5.5 10" stroke="#e02020" stroke-width="2.5"/><circle cx="4.5" cy="11.5" r="3.2" fill="#e02020"/></svg><div class="t" style="left:130px;top:638.44px;font-size:12px;color:#000;">CPU Core</div><div class="t" style="left:258.5px;width:100px;text-align:right;top:638.44px;font-size:12px;color:#000;letter-spacing:-0.5px;">76.0 °C</div><div class="t" style="left:345.5px;width:100px;text-align:right;top:638.44px;font-size:12px;color:#000;letter-spacing:-0.5px;">34.0 °C</div><div class="t" style="left:432.0px;width:100px;text-align:right;top:638.44px;font-size:12px;color:#000;letter-spacing:-0.5px;">76.0 °C</div><div class="t" style="left:130px;top:656.44px;font-size:12px;color:#000;">SYS</div><div class="t" style="left:258.5px;width:100px;text-align:right;top:656.44px;font-size:12px;color:#000;letter-spacing:-0.5px;">32.0 °C</div><div class="t" style="left:345.5px;width:100px;text-align:right;top:656.44px;font-size:12px;color:#000;letter-spacing:-0.5px;">32.0 °C</div><div class="t" style="left:432.0px;width:100px;text-align:right;top:656.44px;font-size:12px;color:#000;letter-spacing:-0.5px;">35.0 °C</div><div class="t" style="left:130px;top:674.44px;font-size:12px;color:#000;">MOS</div><div class="t" style="left:258.5px;width:100px;text-align:right;top:674.44px;font-size:12px;color:#000;letter-spacing:-0.5px;">41.0 °C</div><div class="t" style="left:345.5px;width:100px;text-align:right;top:674.44px;font-size:12px;color:#000;letter-spacing:-0.5px;">32.0 °C</div><div class="t" style="left:432.0px;width:100px;text-align:right;top:674.44px;font-size:12px;color:#000;letter-spacing:-0.5px;">41.0 °C</div><div class="t" style="left:130px;top:692.44px;font-size:12px;color:#000;">PCH</div><div class="t" style="left:258.5px;width:100px;text-align:right;top:692.44px;font-size:12px;color:#000;letter-spacing:-0.5px;">39.0 °C</div><div class="t" style="left:345.5px;width:100px;text-align:right;top:692.44px;font-size:12px;color:#000;letter-spacing:-0.5px;">37.0 °C</div><div class="t" style="left:432.0px;width:100px;text-align:right;top:692.44px;font-size:12px;color:#000;letter-spacing:-0.5px;">39.0 °C</div><div class="t" style="left:130px;top:710.44px;font-size:12px;color:#000;">CPU Socket</div><div class="t" style="left:258.5px;width:100px;text-align:right;top:710.44px;font-size:12px;color:#000;letter-spacing:-0.5px;">43.0 °C</div><div class="t" style="left:345.5px;width:100px;text-align:right;top:710.44px;font-size:12px;color:#000;letter-spacing:-0.5px;">32.0 °C</div><div class="t" style="left:432.0px;width:100px;text-align:right;top:710.44px;font-size:12px;color:#000;letter-spacing:-0.5px;">43.0 °C</div><div class="t" style="left:130px;top:728.44px;font-size:12px;color:#000;">PCH</div><div class="t" style="left:258.5px;width:100px;text-align:right;top:728.44px;font-size:12px;color:#000;letter-spacing:-0.5px;">38.0 °C</div><div class="t" style="left:345.5px;width:100px;text-align:right;top:728.44px;font-size:12px;color:#000;letter-spacing:-0.5px;">37.0 °C</div><div class="t" style="left:432.0px;width:100px;text-align:right;top:728.44px;font-size:12px;color:#000;letter-spacing:-0.5px;">39.0 °C</div><div class="t" style="left:111px;top:746.44px;font-size:12px;color:#000;">Fans</div><svg style="position:absolute;left:90px;top:744px" width="16" height="16" viewBox="0 0 16 16" ><rect x="0" y="0" width="16" height="16" fill="#5a5a5a"/><circle cx="8" cy="8" r="6.5" fill="#d8d8d8"/><path d="M8 8 L3 2 L8 5 Z M8 8 L14 3 L11 8 Z M8 8 L13 14 L8 11 Z M8 8 L2 13 L5 8 Z" fill="#3a3a3a"/><circle cx="8" cy="8" r="1.5" fill="#000"/></svg><div class="t" style="left:130px;top:764.44px;font-size:12px;color:#000;">CPU</div><div class="t" style="left:258.5px;width:100px;text-align:right;top:764.44px;font-size:12px;color:#000;letter-spacing:-0.5px;">2061 RPM</div><div class="t" style="left:345.5px;width:100px;text-align:right;top:764.44px;font-size:12px;color:#000;letter-spacing:-0.5px;">399 RPM</div><div class="t" style="left:432.0px;width:100px;text-align:right;top:764.44px;font-size:12px;color:#000;letter-spacing:-0.5px;">2108 RPM</div><div class="t" style="left:130px;top:782.44px;font-size:12px;color:#000;">PUMP</div><div class="t" style="left:258.5px;width:100px;text-align:right;top:782.44px;font-size:12px;color:#000;letter-spacing:-0.5px;">1788 RPM</div><div class="t" style="left:345.5px;width:100px;text-align:right;top:782.44px;font-size:12px;color:#000;letter-spacing:-0.5px;">749 RPM</div><div class="t" style="left:432.0px;width:100px;text-align:right;top:782.44px;font-size:12px;color:#000;letter-spacing:-0.5px;">1801 RPM</div><div class="t" style="left:130px;top:800.44px;font-size:12px;color:#000;">SYS2</div><div class="t" style="left:258.5px;width:100px;text-align:right;top:800.44px;font-size:12px;color:#000;letter-spacing:-0.5px;">1938 RPM</div><div class="t" style="left:345.5px;width:100px;text-align:right;top:800.44px;font-size:12px;color:#000;letter-spacing:-0.5px;">850 RPM</div><div class="t" style="left:432.0px;width:100px;text-align:right;top:800.44px;font-size:12px;color:#000;letter-spacing:-0.5px;">1954 RPM</div><div class="t" style="left:111px;top:818.44px;font-size:12px;color:#000;">Utilization</div><svg style="position:absolute;left:90px;top:816px" width="16" height="16" viewBox="0 0 16 16" ><rect x="0" y="1" width="16" height="14" fill="#202820" stroke="#506050" stroke-width="1"/><path d="M1 10 L3 8 L4 11 L6 6 L8 10 L10 5 L12 9 L15 7" fill="none" stroke="#20d040" stroke-width="1.3"/></svg><div class="t" style="left:130px;top:836.44px;font-size:12px;color:#000;">System Memory Load</div><div class="t" style="left:258.5px;width:100px;text-align:right;top:836.44px;font-size:12px;color:#000;letter-spacing:-0.5px;">20.0 %</div><div class="t" style="left:345.5px;width:100px;text-align:right;top:836.44px;font-size:12px;color:#000;letter-spacing:-0.5px;">18.0 %</div><div class="t" style="left:432.0px;width:100px;text-align:right;top:836.44px;font-size:12px;color:#000;letter-spacing:-0.5px;">20.0 %</div><div class="t" style="left:130px;top:854.44px;font-size:12px;color:#000;">Available System Memory</div><div class="t" style="left:258.5px;width:100px;text-align:right;top:854.44px;font-size:12px;color:#000;letter-spacing:-0.5px;">25.3 GB</div><div class="t" style="left:345.5px;width:100px;text-align:right;top:854.44px;font-size:12px;color:#000;letter-spacing:-0.5px;">25.3 GB</div><div class="t" style="left:432.0px;width:100px;text-align:right;top:854.44px;font-size:12px;color:#000;letter-spacing:-0.5px;">26.0 GB</div><div class="t" style="left:92px;top:872.44px;font-size:12px;color:#000;">Intel Core i5 12600KF</div><svg style="position:absolute;left:71.5px;top:870px" width="15" height="15" viewBox="0 0 15 15" ><defs><radialGradient id="chg"><stop offset="0" stop-color="#ffe040"/><stop offset="1" stop-color="#c89810"/></radialGradient></defs><rect x="0" y="0" width="15" height="15" fill="#1f4f2a"/><rect x="2" y="2" width="11" height="11" fill="none" stroke="#e0c030" stroke-width="1.4" stroke-dasharray="1 0.8"/><rect x="4" y="4" width="7" height="7" fill="url(#chg)"/></svg><div class="t" style="left:111px;top:890.44px;font-size:12px;color:#000;">Voltages</div><svg style="position:absolute;left:90px;top:888px" width="16" height="16" viewBox="0 0 16 16" ><path d="M0.6 11.6 L6.6 3.6 L8.3 7.3 L15.6 3.2 L9.3 10.9 L7.6 7.8 Z" fill="#f2c21a" stroke="#b07a00" stroke-width="0.7" stroke-linejoin="round"/></svg><div class="t" style="left:111px;top:908.44px;font-size:12px;color:#000;">Temperatures</div><svg style="position:absolute;left:90px;top:906px" width="16" height="16" viewBox="0 0 16 16" ><path d="M13.5 1.5 L5.5 10" stroke="#c8c8c8" stroke-width="2.5" stroke-linecap="round"/><path d="M9.5 6 L5.5 10" stroke="#e02020" stroke-width="2.5"/><circle cx="4.5" cy="11.5" r="3.2" fill="#e02020"/></svg><div class="t" style="left:130px;top:926.44px;font-size:12px;color:#000;">Package</div><div class="t" style="left:258.5px;width:100px;text-align:right;top:926.44px;font-size:12px;color:#000;letter-spacing:-0.5px;">77.0 °C</div><div class="t" style="left:345.5px;width:100px;text-align:right;top:926.44px;font-size:12px;color:#000;letter-spacing:-0.5px;">34.0 °C</div><div class="t" style="left:432.0px;width:100px;text-align:right;top:926.44px;font-size:12px;color:#000;letter-spacing:-0.5px;">77.0 °C</div><div class="t" style="left:130px;top:944.44px;font-size:12px;color:#000;">VR</div><div class="t" style="left:258.5px;width:100px;text-align:right;top:944.44px;font-size:12px;color:#000;letter-spacing:-0.5px;">44.0 °C</div><div class="t" style="left:345.5px;width:100px;text-align:right;top:944.44px;font-size:12px;color:#000;letter-spacing:-0.5px;">35.0 °C</div><div class="t" style="left:432.0px;width:100px;text-align:right;top:944.44px;font-size:12px;color:#000;letter-spacing:-0.5px;">44.0 °C</div><div class="t" style="left:130px;top:962.44px;font-size:12px;color:#000;">P-Cores (Max)</div><div class="t" style="left:258.5px;width:100px;text-align:right;top:962.44px;font-size:12px;color:#000;letter-spacing:-0.5px;">77.0 °C</div><div class="t" style="left:345.5px;width:100px;text-align:right;top:962.44px;font-size:12px;color:#000;letter-spacing:-0.5px;">31.0 °C</div><div class="t" style="left:432.0px;width:100px;text-align:right;top:962.44px;font-size:12px;color:#000;letter-spacing:-0.5px;">78.0 °C</div><div class="t" style="left:130px;top:980.44px;font-size:12px;color:#000;">E-Cores (Max)</div><div class="t" style="left:258.5px;width:100px;text-align:right;top:980.44px;font-size:12px;color:#000;letter-spacing:-0.5px;">65.0 °C</div><div class="t" style="left:345.5px;width:100px;text-align:right;top:980.44px;font-size:12px;color:#000;letter-spacing:-0.5px;">30.0 °C</div><div class="t" style="left:432.0px;width:100px;text-align:right;top:980.44px;font-size:12px;color:#000;letter-spacing:-0.5px;">67.0 °C</div><div class="t" style="left:111px;top:998.44px;font-size:12px;color:#000;">Powers</div><svg style="position:absolute;left:90px;top:996px" width="16" height="16" viewBox="0 0 16 16" ><path d="M8 1 C10 4 13 6 13 10 A5 5 0 0 1 3 10 C3 7 5 6 6 3 C7 5 7 6 8 7 Z" fill="none" stroke="#f08020" stroke-width="1.5"/><circle cx="8" cy="11" r="2" fill="#f0a040"/></svg><div class="t" style="left:130px;top:1016.44px;font-size:12px;color:#000;">Package</div><div class="t" style="left:258.5px;width:100px;text-align:right;top:1016.44px;font-size:12px;color:#000;letter-spacing:-0.5px;">140.19 W</div><div class="t" style="left:345.5px;width:100px;text-align:right;top:1016.44px;font-size:12px;color:#000;letter-spacing:-0.5px;">3.25 W</div><div class="t" style="left:432.0px;width:100px;text-align:right;top:1016.44px;font-size:12px;color:#000;letter-spacing:-0.5px;">158.34 W</div><div class="t" style="left:130px;top:1034.44px;font-size:12px;color:#000;">IA Cores</div><div class="t" style="left:258.5px;width:100px;text-align:right;top:1034.44px;font-size:12px;color:#000;letter-spacing:-0.5px;">142.34 W</div><div class="t" style="left:345.5px;width:100px;text-align:right;top:1034.44px;font-size:12px;color:#000;letter-spacing:-0.5px;">1.83 W</div><div class="t" style="left:432.0px;width:100px;text-align:right;top:1034.44px;font-size:12px;color:#000;letter-spacing:-0.5px;">156.88 W</div><div class="t" style="left:130px;top:1052.44px;font-size:12px;color:#000;">VR Out</div><div class="t" style="left:258.5px;width:100px;text-align:right;top:1052.44px;font-size:12px;color:#000;letter-spacing:-0.5px;">131.00 W</div><div class="t" style="left:345.5px;width:100px;text-align:right;top:1052.44px;font-size:12px;color:#000;letter-spacing:-0.5px;">0.00 W</div><div class="t" style="left:432.0px;width:100px;text-align:right;top:1052.44px;font-size:12px;color:#000;letter-spacing:-0.5px;">133.00 W</div><div class="t" style="left:130px;top:1070.44px;font-size:12px;color:#000;">VR In</div><div class="t" style="left:258.5px;width:100px;text-align:right;top:1070.44px;font-size:12px;color:#000;letter-spacing:-0.5px;">172.00 W</div><div class="t" style="left:345.5px;width:100px;text-align:right;top:1070.44px;font-size:12px;color:#000;letter-spacing:-0.5px;">2.00 W</div><div class="t" style="left:432.0px;width:100px;text-align:right;top:1070.44px;font-size:12px;color:#000;letter-spacing:-0.5px;">174.00 W</div><div class="t" style="left:130px;top:1088.44px;font-size:12px;color:#000;">Power Max (PL1)</div><div class="t" style="left:258.5px;width:100px;text-align:right;top:1088.44px;font-size:12px;color:#000;letter-spacing:-0.5px;">4095.88 W</div><div class="t" style="left:345.5px;width:100px;text-align:right;top:1088.44px;font-size:12px;color:#000;letter-spacing:-0.5px;">4095.88 W</div><div class="t" style="left:432.0px;width:100px;text-align:right;top:1088.44px;font-size:12px;color:#000;letter-spacing:-0.5px;">4095.88 W</div><div class="t" style="left:130px;top:1106.44px;font-size:12px;color:#000;">Short Power Max (PL2)</div><div class="t" style="left:258.5px;width:100px;text-align:right;top:1106.44px;font-size:12px;color:#000;letter-spacing:-0.5px;">4095.88 W</div><div class="t" style="left:345.5px;width:100px;text-align:right;top:1106.44px;font-size:12px;color:#000;letter-spacing:-0.5px;">4095.88 W</div><div class="t" style="left:432.0px;width:100px;text-align:right;top:1106.44px;font-size:12px;color:#000;letter-spacing:-0.5px;">4095.88 W</div><div class="t" style="left:111px;top:1124.44px;font-size:12px;color:#000;">Currents</div><svg style="position:absolute;left:90px;top:1122px" width="16" height="16" viewBox="0 0 16 16" ><path d="M0.6 11.6 L6.6 3.6 L8.3 7.3 L15.6 3.2 L9.3 10.9 L7.6 7.8 Z" fill="#c8d8f8" stroke="#3a6ad0" stroke-width="1" stroke-linejoin="round"/></svg><div class="t" style="left:111px;top:1142.44px;font-size:12px;color:#000;">Utilization</div><svg style="position:absolute;left:90px;top:1140px" width="16" height="16" viewBox="0 0 16 16" ><rect x="0" y="1" width="16" height="14" fill="#202820" stroke="#506050" stroke-width="1"/><path d="M1 10 L3 8 L4 11 L6 6 L8 10 L10 5 L12 9 L15 7" fill="none" stroke="#20d040" stroke-width="1.3"/></svg><div class="t" style="left:111px;top:1160.44px;font-size:12px;color:#000;">Clocks</div><svg style="position:absolute;left:90px;top:1158px" width="16" height="16" viewBox="0 0 16 16" ><path d="M1 14 V3 H4 V14 H7 V3 H10 V14 H13 V3 H15" fill="none" stroke="#3050c0" stroke-width="1.5"/></svg><div class="t" style="left:92px;top:1178.44px;font-size:12px;color:#000;">A-Data Technology AX5U6000C...</div><svg style="position:absolute;left:72px;top:1176px" width="16" height="16" viewBox="0 0 16 16" ><rect x="0" y="5" width="16" height="6" fill="#2a8a5a"/><rect x="1" y="6.2" width="2.5" height="3" fill="#1a2a20"/><rect x="4.5" y="6.2" width="2.5" height="3" fill="#1a2a20"/><rect x="8" y="6.2" width="2.5" height="3" fill="#1a2a20"/><rect x="11.5" y="6.2" width="2.5" height="3" fill="#1a2a20"/><rect x="1" y="11" width="14" height="1.5" fill="#d0b040"/></svg><div class="t" style="left:111px;top:1196.44px;font-size:12px;color:#000;">Voltages</div><svg style="position:absolute;left:90px;top:1194px" width="16" height="16" viewBox="0 0 16 16" ><path d="M0.6 11.6 L6.6 3.6 L8.3 7.3 L15.6 3.2 L9.3 10.9 L7.6 7.8 Z" fill="#f2c21a" stroke="#b07a00" stroke-width="0.7" stroke-linejoin="round"/></svg><div class="t" style="left:130px;top:1214.44px;font-size:12px;color:#000;">VDD (Node A)</div><div class="t" style="left:258.5px;width:100px;text-align:right;top:1214.44px;font-size:12px;color:#000;letter-spacing:-0.5px;">1.365 V</div><div class="t" style="left:345.5px;width:100px;text-align:right;top:1214.44px;font-size:12px;color:#000;letter-spacing:-0.5px;">1.350 V</div><div class="t" style="left:432.0px;width:100px;text-align:right;top:1214.44px;font-size:12px;color:#000;letter-spacing:-0.5px;">1.365 V</div><div class="t" style="left:130px;top:1232.44px;font-size:12px;color:#000;">VDD (Node B)</div><div class="t" style="left:258.5px;width:100px;text-align:right;top:1232.44px;font-size:12px;color:#000;letter-spacing:-0.5px;">1.365 V</div><div class="t" style="left:345.5px;width:100px;text-align:right;top:1232.44px;font-size:12px;color:#000;letter-spacing:-0.5px;">1.365 V</div><div class="t" style="left:432.0px;width:100px;text-align:right;top:1232.44px;font-size:12px;color:#000;letter-spacing:-0.5px;">1.365 V</div><div class="t" style="left:130px;top:1250.44px;font-size:12px;color:#000;">VDDQ</div><div class="t" style="left:258.5px;width:100px;text-align:right;top:1250.44px;font-size:12px;color:#000;letter-spacing:-0.5px;">1.365 V</div><div class="t" style="left:345.5px;width:100px;text-align:right;top:1250.44px;font-size:12px;color:#000;letter-spacing:-0.5px;">1.365 V</div><div class="t" style="left:432.0px;width:100px;text-align:right;top:1250.44px;font-size:12px;color:#000;letter-spacing:-0.5px;">1.365 V</div>
</body></html>
